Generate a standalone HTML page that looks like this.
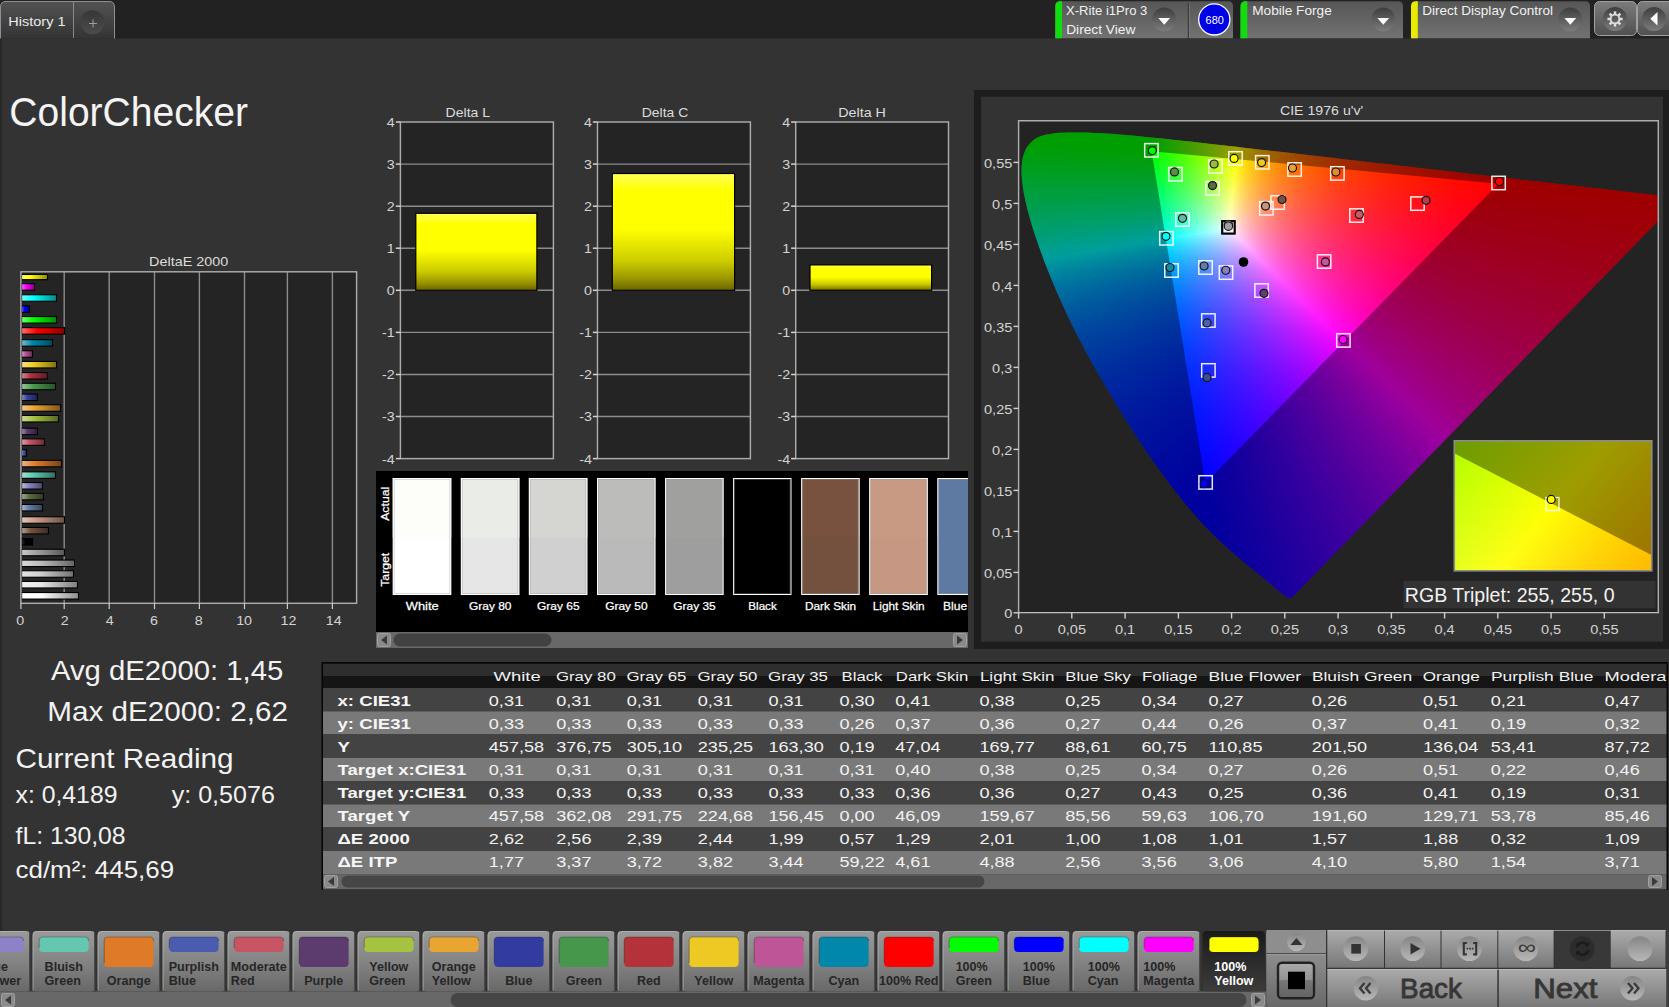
<!DOCTYPE html>
<html><head><meta charset="utf-8"><title>ColorChecker</title>
<style>
html,body{margin:0;padding:0}
body{width:1669px;height:1007px;overflow:hidden;background:#333;font-family:"Liberation Sans",sans-serif;position:relative}
div,i,svg{position:absolute;display:block}
.cg{left:0;top:0;right:0;bottom:0}
.cg i{height:2px}
svg text{font-family:"Liberation Sans",sans-serif}
</style></head>
<body>
<svg width="1669" height="1007" style="left:0;top:0">
<rect x="0" y="0" width="1669" height="38.5" fill="#222"/>
<rect x="0" y="38" width="2" height="969" fill="#272727"/>
<defs><linearGradient id="tabg" x1="0" y1="0" x2="0" y2="1"><stop offset="0" stop-color="#525252"/><stop offset="1" stop-color="#343434"/></linearGradient><linearGradient id="pang" x1="0" y1="0" x2="0" y2="1"><stop offset="0" stop-color="#565656"/><stop offset="1" stop-color="#727272"/></linearGradient><linearGradient id="circ" x1="0" y1="0" x2="0" y2="1"><stop offset="0" stop-color="#3e3e3e"/><stop offset="1" stop-color="#7c7c7c"/></linearGradient><linearGradient id="circ2" x1="0" y1="0" x2="0" y2="1"><stop offset="0" stop-color="#363636"/><stop offset="1" stop-color="#4c4c4c"/></linearGradient><linearGradient id="btng" x1="0" y1="0" x2="0" y2="1"><stop offset="0" stop-color="#7c7c7c"/><stop offset="1" stop-color="#505050"/></linearGradient></defs>
<path d="M0.5,38.5 V7 Q0.5,1.5 6,1.5 H109 Q114.5,1.5 114.5,7 V38.5" fill="url(#tabg)" stroke="#909090" stroke-width="1"/>
<line x1="73.5" y1="2" x2="73.5" y2="38" stroke="#8a8a8a" stroke-width="1"/>
<circle cx="92.5" cy="22.2" r="12" fill="url(#circ2)"/>
<path d="M89,23.5h8M93,19.5v8" stroke="#a0a0a0" stroke-width="1" fill="none"/>
<text transform="matrix(1.060 0 0 1 8.30 25.80)" font-size="13.7" fill="#ececec">History 1</text>
<path d="M1055.3,38.2 V6 Q1055.3,1.2 1060.3,1.2 H1228 Q1233,1.2 1233,6 V38.2 Z" fill="url(#pang)"/><path d="M1055.3,38.2 V6 Q1055.3,1.2 1060.3,1.2 H1062.1 V38.2 Z" fill="#10dc10"/>
<path d="M1240.5,38.2 V6 Q1240.5,1.2 1245.5,1.2 H1398 Q1403,1.2 1403,6 V38.2 Z" fill="url(#pang)"/><path d="M1240.5,38.2 V6 Q1240.5,1.2 1245.5,1.2 H1247.3 V38.2 Z" fill="#10dc10"/>
<path d="M1411,38.2 V6 Q1411,1.2 1416,1.2 H1585 Q1590,1.2 1590,6 V38.2 Z" fill="url(#pang)"/><path d="M1411,38.2 V6 Q1411,1.2 1416,1.2 H1417.8 V38.2 Z" fill="#eaea00"/>
<circle cx="1164.2" cy="19.5" r="12" fill="url(#circ)"/>
<path d="M1158.3,18 h11.8 l-5.9,6.8 z" fill="#fff"/>
<circle cx="1383.3" cy="19.5" r="12" fill="url(#circ)"/>
<path d="M1377.4,18 h11.8 l-5.9,6.8 z" fill="#fff"/>
<circle cx="1570.3" cy="19.5" r="12" fill="url(#circ)"/>
<path d="M1564.4,18 h11.8 l-5.9,6.8 z" fill="#fff"/>
<line x1="1188.4" y1="3" x2="1188.4" y2="38" stroke="#3a3a3a" stroke-width="1.2"/>
<line x1="1189.5" y1="3" x2="1189.5" y2="38" stroke="#808080" stroke-opacity="0.6" stroke-width="1"/>
<circle cx="1214.3" cy="19.4" r="15.6" fill="#0000e6" stroke="#fff" stroke-width="1.3"/>
<text x="1205.60" y="23.60" font-size="10.9" fill="#fff">680</text>
<text transform="matrix(0.997 0 0 1 1066.00 15.00)" font-size="13.1" fill="#f2f2f2">X-Rite i1Pro 3</text>
<text transform="matrix(1.047 0 0 1 1066.20 33.70)" font-size="13.1" fill="#f2f2f2">Direct View</text>
<text transform="matrix(1.041 0 0 1 1252.20 15.00)" font-size="13.1" fill="#f2f2f2">Mobile Forge</text>
<text transform="matrix(1.034 0 0 1 1422.20 15.00)" font-size="13.1" fill="#f2f2f2">Direct Display Control</text>
<rect x="1594.5" y="1.5" width="42" height="34" rx="5" fill="url(#btng)" stroke="#a0a0a0"/>
<rect x="1637.5" y="1.5" width="42" height="34" rx="5" fill="url(#btng)" stroke="#a0a0a0"/>
<circle cx="1615" cy="19" r="12" fill="url(#circ)"/>
<circle cx="1654" cy="19" r="12" fill="url(#circ)"/>
<g transform="translate(1615,19)" fill="none" stroke="#e0e0e0"><circle r="4.4" stroke-width="1.9"/><line x1="0" y1="-5" x2="0" y2="-7.6" stroke-width="2.5" transform="rotate(0)"/><line x1="0" y1="-5" x2="0" y2="-7.6" stroke-width="2.5" transform="rotate(45)"/><line x1="0" y1="-5" x2="0" y2="-7.6" stroke-width="2.5" transform="rotate(90)"/><line x1="0" y1="-5" x2="0" y2="-7.6" stroke-width="2.5" transform="rotate(135)"/><line x1="0" y1="-5" x2="0" y2="-7.6" stroke-width="2.5" transform="rotate(180)"/><line x1="0" y1="-5" x2="0" y2="-7.6" stroke-width="2.5" transform="rotate(225)"/><line x1="0" y1="-5" x2="0" y2="-7.6" stroke-width="2.5" transform="rotate(270)"/><line x1="0" y1="-5" x2="0" y2="-7.6" stroke-width="2.5" transform="rotate(315)"/></g>
<path d="M1657.5,12 v13.5 l-7.2,-6.75 z" fill="#fff"/>
<text transform="matrix(0.960 0 0 1 9.30 125.70)" font-size="40.7" fill="#f4f4f4">ColorChecker</text>
<defs><linearGradient id="b0" x1="0" y1="0" x2="1" y2="0"><stop offset="0" stop-color="#ffff72"/><stop offset="0.35" stop-color="#ffff00"/><stop offset="1" stop-color="#8c8c00"/></linearGradient><linearGradient id="b1" x1="0" y1="0" x2="1" y2="0"><stop offset="0" stop-color="#ff72ff"/><stop offset="0.35" stop-color="#ff00ff"/><stop offset="1" stop-color="#8c008c"/></linearGradient><linearGradient id="b2" x1="0" y1="0" x2="1" y2="0"><stop offset="0" stop-color="#72ffff"/><stop offset="0.35" stop-color="#00ffff"/><stop offset="1" stop-color="#008c8c"/></linearGradient><linearGradient id="b3" x1="0" y1="0" x2="1" y2="0"><stop offset="0" stop-color="#7272ff"/><stop offset="0.35" stop-color="#0000ff"/><stop offset="1" stop-color="#00008c"/></linearGradient><linearGradient id="b4" x1="0" y1="0" x2="1" y2="0"><stop offset="0" stop-color="#72ff72"/><stop offset="0.35" stop-color="#00ff00"/><stop offset="1" stop-color="#008c00"/></linearGradient><linearGradient id="b5" x1="0" y1="0" x2="1" y2="0"><stop offset="0" stop-color="#ff7272"/><stop offset="0.35" stop-color="#ff0000"/><stop offset="1" stop-color="#8c0000"/></linearGradient><linearGradient id="b6" x1="0" y1="0" x2="1" y2="0"><stop offset="0" stop-color="#72bdd0"/><stop offset="0.35" stop-color="#0088aa"/><stop offset="1" stop-color="#004a5d"/></linearGradient><linearGradient id="b7" x1="0" y1="0" x2="1" y2="0"><stop offset="0" stop-color="#d9a1c6"/><stop offset="0.35" stop-color="#bb5599"/><stop offset="1" stop-color="#662e54"/></linearGradient><linearGradient id="b8" x1="0" y1="0" x2="1" y2="0"><stop offset="0" stop-color="#f5e285"/><stop offset="0.35" stop-color="#eecc22"/><stop offset="1" stop-color="#827012"/></linearGradient><linearGradient id="b9" x1="0" y1="0" x2="1" y2="0"><stop offset="0" stop-color="#d38d95"/><stop offset="0.35" stop-color="#b03040"/><stop offset="1" stop-color="#601a23"/></linearGradient><linearGradient id="b10" x1="0" y1="0" x2="1" y2="0"><stop offset="0" stop-color="#99c69b"/><stop offset="0.35" stop-color="#47994a"/><stop offset="1" stop-color="#275428"/></linearGradient><linearGradient id="b11" x1="0" y1="0" x2="1" y2="0"><stop offset="0" stop-color="#8f95c7"/><stop offset="0.35" stop-color="#35409a"/><stop offset="1" stop-color="#1d2354"/></linearGradient><linearGradient id="b12" x1="0" y1="0" x2="1" y2="0"><stop offset="0" stop-color="#f2ca8d"/><stop offset="0.35" stop-color="#e8a030"/><stop offset="1" stop-color="#7f581a"/></linearGradient><linearGradient id="b13" x1="0" y1="0" x2="1" y2="0"><stop offset="0" stop-color="#cbdc95"/><stop offset="0.35" stop-color="#a2c040"/><stop offset="1" stop-color="#596923"/></linearGradient><linearGradient id="b14" x1="0" y1="0" x2="1" y2="0"><stop offset="0" stop-color="#a592af"/><stop offset="0.35" stop-color="#5c3a6e"/><stop offset="1" stop-color="#321f3c"/></linearGradient><linearGradient id="b15" x1="0" y1="0" x2="1" y2="0"><stop offset="0" stop-color="#dfa0aa"/><stop offset="0.35" stop-color="#c65465"/><stop offset="1" stop-color="#6c2e37"/></linearGradient><linearGradient id="b16" x1="0" y1="0" x2="1" y2="0"><stop offset="0" stop-color="#9aa5d2"/><stop offset="0.35" stop-color="#485cae"/><stop offset="1" stop-color="#27325f"/></linearGradient><linearGradient id="b17" x1="0" y1="0" x2="1" y2="0"><stop offset="0" stop-color="#ecb588"/><stop offset="0.35" stop-color="#dd7a28"/><stop offset="1" stop-color="#794316"/></linearGradient><linearGradient id="b18" x1="0" y1="0" x2="1" y2="0"><stop offset="0" stop-color="#a8e0d3"/><stop offset="0.35" stop-color="#62c8b0"/><stop offset="1" stop-color="#356e60"/></linearGradient><linearGradient id="b19" x1="0" y1="0" x2="1" y2="0"><stop offset="0" stop-color="#bdbbdc"/><stop offset="0.35" stop-color="#8884c0"/><stop offset="1" stop-color="#4a4869"/></linearGradient><linearGradient id="b20" x1="0" y1="0" x2="1" y2="0"><stop offset="0" stop-color="#a4ae95"/><stop offset="0.35" stop-color="#5a6c40"/><stop offset="1" stop-color="#313b23"/></linearGradient><linearGradient id="b21" x1="0" y1="0" x2="1" y2="0"><stop offset="0" stop-color="#a7b9ce"/><stop offset="0.35" stop-color="#6080a6"/><stop offset="1" stop-color="#34465b"/></linearGradient><linearGradient id="b22" x1="0" y1="0" x2="1" y2="0"><stop offset="0" stop-color="#e0c7bb"/><stop offset="0.35" stop-color="#c89a84"/><stop offset="1" stop-color="#6e5448"/></linearGradient><linearGradient id="b23" x1="0" y1="0" x2="1" y2="0"><stop offset="0" stop-color="#b29f95"/><stop offset="0.35" stop-color="#74513f"/><stop offset="1" stop-color="#3f2c22"/></linearGradient><linearGradient id="b24" x1="0" y1="0" x2="1" y2="0"><stop offset="0" stop-color="#2a2a2a"/><stop offset="0.35" stop-color="#000000"/><stop offset="1" stop-color="#000000"/></linearGradient><linearGradient id="b25" x1="0" y1="0" x2="1" y2="0"><stop offset="0" stop-color="#cacaca"/><stop offset="0.35" stop-color="#a0a0a0"/><stop offset="1" stop-color="#585858"/></linearGradient><linearGradient id="b26" x1="0" y1="0" x2="1" y2="0"><stop offset="0" stop-color="#dadada"/><stop offset="0.35" stop-color="#bcbcbc"/><stop offset="1" stop-color="#676767"/></linearGradient><linearGradient id="b27" x1="0" y1="0" x2="1" y2="0"><stop offset="0" stop-color="#e5e5e5"/><stop offset="0.35" stop-color="#d0d0d0"/><stop offset="1" stop-color="#727272"/></linearGradient><linearGradient id="b28" x1="0" y1="0" x2="1" y2="0"><stop offset="0" stop-color="#f1f1f1"/><stop offset="0.35" stop-color="#e6e6e6"/><stop offset="1" stop-color="#7e7e7e"/></linearGradient><linearGradient id="b29" x1="0" y1="0" x2="1" y2="0"><stop offset="0" stop-color="#ffffff"/><stop offset="0.35" stop-color="#ffffff"/><stop offset="1" stop-color="#8c8c8c"/></linearGradient></defs>
<rect x="20.9" y="271.8" width="335.7" height="331.5" fill="#242424"/>
<line x1="64.2" y1="271.8" x2="64.2" y2="603.3" stroke="#8c8c8c" stroke-width="1.4"/>
<line x1="109.2" y1="271.8" x2="109.2" y2="603.3" stroke="#8c8c8c" stroke-width="1.4"/>
<line x1="154.5" y1="271.8" x2="154.5" y2="603.3" stroke="#8c8c8c" stroke-width="1.4"/>
<line x1="199.4" y1="271.8" x2="199.4" y2="603.3" stroke="#8c8c8c" stroke-width="1.4"/>
<line x1="244.5" y1="271.8" x2="244.5" y2="603.3" stroke="#8c8c8c" stroke-width="1.4"/>
<line x1="287.4" y1="271.8" x2="287.4" y2="603.3" stroke="#8c8c8c" stroke-width="1.4"/>
<line x1="332.4" y1="271.8" x2="332.4" y2="603.3" stroke="#8c8c8c" stroke-width="1.4"/>
<rect x="21.6" y="274.45" width="25.9" height="5.2" fill="url(#b0)" stroke="#000" stroke-width="1.1"/>
<rect x="21.6" y="283.65" width="12.9" height="6.5" fill="url(#b1)" stroke="#000" stroke-width="1.1"/>
<rect x="21.6" y="294.75" width="34.9" height="6.5" fill="url(#b2)" stroke="#000" stroke-width="1.1"/>
<rect x="21.6" y="305.85" width="7.9" height="6.5" fill="url(#b3)" stroke="#000" stroke-width="1.1"/>
<rect x="21.6" y="316.55" width="34.9" height="6.5" fill="url(#b4)" stroke="#000" stroke-width="1.1"/>
<rect x="21.6" y="327.65" width="42.9" height="6.5" fill="url(#b5)" stroke="#000" stroke-width="1.1"/>
<rect x="21.6" y="339.65" width="30.9" height="6.5" fill="url(#b6)" stroke="#000" stroke-width="1.1"/>
<rect x="21.6" y="350.75" width="10.9" height="6.5" fill="url(#b7)" stroke="#000" stroke-width="1.1"/>
<rect x="21.6" y="361.45" width="34.9" height="6.5" fill="url(#b8)" stroke="#000" stroke-width="1.1"/>
<rect x="21.6" y="372.55" width="25.9" height="6.5" fill="url(#b9)" stroke="#000" stroke-width="1.1"/>
<rect x="21.6" y="383.25" width="33.9" height="6.5" fill="url(#b10)" stroke="#000" stroke-width="1.1"/>
<rect x="21.6" y="394.05" width="15.9" height="6.5" fill="url(#b11)" stroke="#000" stroke-width="1.1"/>
<rect x="21.6" y="404.75" width="38.9" height="6.5" fill="url(#b12)" stroke="#000" stroke-width="1.1"/>
<rect x="21.6" y="415.45" width="36.9" height="6.5" fill="url(#b13)" stroke="#000" stroke-width="1.1"/>
<rect x="21.6" y="428.15" width="15.9" height="6.5" fill="url(#b14)" stroke="#000" stroke-width="1.1"/>
<rect x="21.6" y="438.85" width="22.9" height="6.5" fill="url(#b15)" stroke="#000" stroke-width="1.1"/>
<rect x="21.6" y="449.65" width="4.9" height="6.5" fill="url(#b16)" stroke="#000" stroke-width="1.1"/>
<rect x="21.6" y="460.35" width="39.9" height="6.5" fill="url(#b17)" stroke="#000" stroke-width="1.1"/>
<rect x="21.6" y="471.85" width="33.9" height="6.5" fill="url(#b18)" stroke="#000" stroke-width="1.1"/>
<rect x="21.6" y="482.55" width="20.9" height="6.5" fill="url(#b19)" stroke="#000" stroke-width="1.1"/>
<rect x="21.6" y="493.35" width="21.9" height="6.5" fill="url(#b20)" stroke="#000" stroke-width="1.1"/>
<rect x="21.6" y="504.45" width="20.9" height="6.5" fill="url(#b21)" stroke="#000" stroke-width="1.1"/>
<rect x="21.6" y="516.75" width="42.9" height="6.5" fill="url(#b22)" stroke="#000" stroke-width="1.1"/>
<rect x="21.6" y="527.45" width="26.9" height="6.5" fill="url(#b23)" stroke="#000" stroke-width="1.1"/>
<rect x="21.6" y="538.55" width="10.9" height="6.5" fill="url(#b24)" stroke="#000" stroke-width="1.1"/>
<rect x="21.6" y="549.25" width="42.9" height="6.5" fill="url(#b25)" stroke="#000" stroke-width="1.1"/>
<rect x="21.6" y="560.05" width="52.9" height="6.5" fill="url(#b26)" stroke="#000" stroke-width="1.1"/>
<rect x="21.6" y="570.75" width="51.9" height="6.5" fill="url(#b27)" stroke="#000" stroke-width="1.1"/>
<rect x="21.6" y="581.45" width="55.9" height="6.5" fill="url(#b28)" stroke="#000" stroke-width="1.1"/>
<rect x="21.6" y="592.55" width="56.9" height="6.5" fill="url(#b29)" stroke="#000" stroke-width="1.1"/>
<rect x="20.9" y="271.8" width="335.7" height="331.5" fill="none" stroke="#acacac" stroke-width="1.45"/>
<line x1="20.9" y1="603.3" x2="20.9" y2="609.1" stroke="#cccccc" stroke-width="1.2"/>
<text transform="matrix(1.050 0 0 1 16.24 625.00)" font-size="13.6" fill="#d4d4d4">0</text>
<line x1="64.2" y1="603.3" x2="64.2" y2="609.1" stroke="#cccccc" stroke-width="1.2"/>
<text transform="matrix(1.050 0 0 1 60.84 625.00)" font-size="13.6" fill="#d4d4d4">2</text>
<line x1="109.2" y1="603.3" x2="109.2" y2="609.1" stroke="#cccccc" stroke-width="1.2"/>
<text transform="matrix(1.050 0 0 1 105.84 625.00)" font-size="13.6" fill="#d4d4d4">4</text>
<line x1="154.5" y1="603.3" x2="154.5" y2="609.1" stroke="#cccccc" stroke-width="1.2"/>
<text transform="matrix(1.050 0 0 1 150.04 625.00)" font-size="13.6" fill="#d4d4d4">6</text>
<line x1="199.4" y1="603.3" x2="199.4" y2="609.1" stroke="#cccccc" stroke-width="1.2"/>
<text transform="matrix(1.050 0 0 1 194.64 625.00)" font-size="13.6" fill="#d4d4d4">8</text>
<line x1="244.5" y1="603.3" x2="244.5" y2="609.1" stroke="#cccccc" stroke-width="1.2"/>
<text transform="matrix(1.050 0 0 1 236.17 625.00)" font-size="13.6" fill="#d4d4d4">10</text>
<line x1="287.4" y1="603.3" x2="287.4" y2="609.1" stroke="#cccccc" stroke-width="1.2"/>
<text transform="matrix(1.050 0 0 1 280.47 625.00)" font-size="13.6" fill="#d4d4d4">12</text>
<line x1="332.4" y1="603.3" x2="332.4" y2="609.1" stroke="#cccccc" stroke-width="1.2"/>
<text transform="matrix(1.050 0 0 1 325.77 625.00)" font-size="13.6" fill="#d4d4d4">14</text>
<text transform="matrix(1.057 0 0 1 149.10 265.90)" font-size="13.6" fill="#dcdcdc">DeltaE 2000</text>
<defs><linearGradient id="ybar" x1="0" y1="0" x2="0" y2="1"><stop offset="0" stop-color="#ffff58"/><stop offset="0.15" stop-color="#ffff00"/><stop offset="0.48" stop-color="#ffff00"/><stop offset="0.75" stop-color="#cccc00"/><stop offset="0.9" stop-color="#9a9600"/><stop offset="1" stop-color="#6a6400"/></linearGradient></defs>
<rect x="400.4" y="122" width="153" height="336.6" fill="#242424"/>
<line x1="400.4" y1="416.5" x2="553.4" y2="416.5" stroke="#8c8c8c" stroke-width="1.4"/>
<line x1="400.4" y1="374.5" x2="553.4" y2="374.5" stroke="#8c8c8c" stroke-width="1.4"/>
<line x1="400.4" y1="332.4" x2="553.4" y2="332.4" stroke="#8c8c8c" stroke-width="1.4"/>
<line x1="400.4" y1="290.3" x2="553.4" y2="290.3" stroke="#8c8c8c" stroke-width="1.4"/>
<line x1="400.4" y1="248.2" x2="553.4" y2="248.2" stroke="#8c8c8c" stroke-width="1.4"/>
<line x1="400.4" y1="206.2" x2="553.4" y2="206.2" stroke="#8c8c8c" stroke-width="1.4"/>
<line x1="400.4" y1="164.1" x2="553.4" y2="164.1" stroke="#8c8c8c" stroke-width="1.4"/>
<rect x="400.4" y="122" width="153" height="336.6" fill="none" stroke="#acacac" stroke-width="1.45"/>
<line x1="395.8" y1="458.6" x2="400.4" y2="458.6" stroke="#d4d4d4" stroke-width="1.5"/>
<text transform="matrix(1.050 0 0 1 382.09 463.50)" font-size="13.6" fill="#d4d4d4">-4</text>
<line x1="395.8" y1="416.5" x2="400.4" y2="416.5" stroke="#d4d4d4" stroke-width="1.5"/>
<text transform="matrix(1.050 0 0 1 382.09 421.43)" font-size="13.6" fill="#d4d4d4">-3</text>
<line x1="395.8" y1="374.5" x2="400.4" y2="374.5" stroke="#d4d4d4" stroke-width="1.5"/>
<text transform="matrix(1.050 0 0 1 382.09 379.35)" font-size="13.6" fill="#d4d4d4">-2</text>
<line x1="395.8" y1="332.4" x2="400.4" y2="332.4" stroke="#d4d4d4" stroke-width="1.5"/>
<text transform="matrix(1.050 0 0 1 382.09 337.27)" font-size="13.6" fill="#d4d4d4">-1</text>
<line x1="395.8" y1="290.3" x2="400.4" y2="290.3" stroke="#d4d4d4" stroke-width="1.5"/>
<text transform="matrix(1.050 0 0 1 386.87 295.20)" font-size="13.6" fill="#d4d4d4">0</text>
<line x1="395.8" y1="248.2" x2="400.4" y2="248.2" stroke="#d4d4d4" stroke-width="1.5"/>
<text transform="matrix(1.050 0 0 1 386.87 253.13)" font-size="13.6" fill="#d4d4d4">1</text>
<line x1="395.8" y1="206.2" x2="400.4" y2="206.2" stroke="#d4d4d4" stroke-width="1.5"/>
<text transform="matrix(1.050 0 0 1 386.87 211.05)" font-size="13.6" fill="#d4d4d4">2</text>
<line x1="395.8" y1="164.1" x2="400.4" y2="164.1" stroke="#d4d4d4" stroke-width="1.5"/>
<text transform="matrix(1.050 0 0 1 386.87 168.97)" font-size="13.6" fill="#d4d4d4">3</text>
<line x1="395.8" y1="122.0" x2="400.4" y2="122.0" stroke="#d4d4d4" stroke-width="1.5"/>
<text transform="matrix(1.050 0 0 1 386.87 126.90)" font-size="13.6" fill="#d4d4d4">4</text>
<rect x="415.8" y="213.3" width="121.1" height="77" fill="url(#ybar)" stroke="#000" stroke-width="1.2"/>
<text transform="matrix(1.037 0 0 1 445.50 116.90)" font-size="13.6" fill="#dcdcdc">Delta L</text>
<rect x="597.5" y="122" width="152.9" height="336.6" fill="#242424"/>
<line x1="597.5" y1="416.5" x2="750.4" y2="416.5" stroke="#8c8c8c" stroke-width="1.4"/>
<line x1="597.5" y1="374.5" x2="750.4" y2="374.5" stroke="#8c8c8c" stroke-width="1.4"/>
<line x1="597.5" y1="332.4" x2="750.4" y2="332.4" stroke="#8c8c8c" stroke-width="1.4"/>
<line x1="597.5" y1="290.3" x2="750.4" y2="290.3" stroke="#8c8c8c" stroke-width="1.4"/>
<line x1="597.5" y1="248.2" x2="750.4" y2="248.2" stroke="#8c8c8c" stroke-width="1.4"/>
<line x1="597.5" y1="206.2" x2="750.4" y2="206.2" stroke="#8c8c8c" stroke-width="1.4"/>
<line x1="597.5" y1="164.1" x2="750.4" y2="164.1" stroke="#8c8c8c" stroke-width="1.4"/>
<rect x="597.5" y="122" width="152.9" height="336.6" fill="none" stroke="#acacac" stroke-width="1.45"/>
<line x1="592.9" y1="458.6" x2="597.5" y2="458.6" stroke="#d4d4d4" stroke-width="1.5"/>
<text transform="matrix(1.050 0 0 1 579.19 463.50)" font-size="13.6" fill="#d4d4d4">-4</text>
<line x1="592.9" y1="416.5" x2="597.5" y2="416.5" stroke="#d4d4d4" stroke-width="1.5"/>
<text transform="matrix(1.050 0 0 1 579.19 421.43)" font-size="13.6" fill="#d4d4d4">-3</text>
<line x1="592.9" y1="374.5" x2="597.5" y2="374.5" stroke="#d4d4d4" stroke-width="1.5"/>
<text transform="matrix(1.050 0 0 1 579.19 379.35)" font-size="13.6" fill="#d4d4d4">-2</text>
<line x1="592.9" y1="332.4" x2="597.5" y2="332.4" stroke="#d4d4d4" stroke-width="1.5"/>
<text transform="matrix(1.050 0 0 1 579.19 337.27)" font-size="13.6" fill="#d4d4d4">-1</text>
<line x1="592.9" y1="290.3" x2="597.5" y2="290.3" stroke="#d4d4d4" stroke-width="1.5"/>
<text transform="matrix(1.050 0 0 1 583.97 295.20)" font-size="13.6" fill="#d4d4d4">0</text>
<line x1="592.9" y1="248.2" x2="597.5" y2="248.2" stroke="#d4d4d4" stroke-width="1.5"/>
<text transform="matrix(1.050 0 0 1 583.97 253.13)" font-size="13.6" fill="#d4d4d4">1</text>
<line x1="592.9" y1="206.2" x2="597.5" y2="206.2" stroke="#d4d4d4" stroke-width="1.5"/>
<text transform="matrix(1.050 0 0 1 583.97 211.05)" font-size="13.6" fill="#d4d4d4">2</text>
<line x1="592.9" y1="164.1" x2="597.5" y2="164.1" stroke="#d4d4d4" stroke-width="1.5"/>
<text transform="matrix(1.050 0 0 1 583.97 168.97)" font-size="13.6" fill="#d4d4d4">3</text>
<line x1="592.9" y1="122.0" x2="597.5" y2="122.0" stroke="#d4d4d4" stroke-width="1.5"/>
<text transform="matrix(1.050 0 0 1 583.97 126.90)" font-size="13.6" fill="#d4d4d4">4</text>
<rect x="612.3" y="173.5" width="122.3" height="116.8" fill="url(#ybar)" stroke="#000" stroke-width="1.2"/>
<text transform="matrix(1.027 0 0 1 641.70 116.90)" font-size="13.6" fill="#dcdcdc">Delta C</text>
<rect x="795.7" y="122" width="152.8" height="336.6" fill="#242424"/>
<line x1="795.7" y1="416.5" x2="948.5" y2="416.5" stroke="#8c8c8c" stroke-width="1.4"/>
<line x1="795.7" y1="374.5" x2="948.5" y2="374.5" stroke="#8c8c8c" stroke-width="1.4"/>
<line x1="795.7" y1="332.4" x2="948.5" y2="332.4" stroke="#8c8c8c" stroke-width="1.4"/>
<line x1="795.7" y1="290.3" x2="948.5" y2="290.3" stroke="#8c8c8c" stroke-width="1.4"/>
<line x1="795.7" y1="248.2" x2="948.5" y2="248.2" stroke="#8c8c8c" stroke-width="1.4"/>
<line x1="795.7" y1="206.2" x2="948.5" y2="206.2" stroke="#8c8c8c" stroke-width="1.4"/>
<line x1="795.7" y1="164.1" x2="948.5" y2="164.1" stroke="#8c8c8c" stroke-width="1.4"/>
<rect x="795.7" y="122" width="152.8" height="336.6" fill="none" stroke="#acacac" stroke-width="1.45"/>
<line x1="791.1" y1="458.6" x2="795.7" y2="458.6" stroke="#d4d4d4" stroke-width="1.5"/>
<text transform="matrix(1.050 0 0 1 777.39 463.50)" font-size="13.6" fill="#d4d4d4">-4</text>
<line x1="791.1" y1="416.5" x2="795.7" y2="416.5" stroke="#d4d4d4" stroke-width="1.5"/>
<text transform="matrix(1.050 0 0 1 777.39 421.43)" font-size="13.6" fill="#d4d4d4">-3</text>
<line x1="791.1" y1="374.5" x2="795.7" y2="374.5" stroke="#d4d4d4" stroke-width="1.5"/>
<text transform="matrix(1.050 0 0 1 777.39 379.35)" font-size="13.6" fill="#d4d4d4">-2</text>
<line x1="791.1" y1="332.4" x2="795.7" y2="332.4" stroke="#d4d4d4" stroke-width="1.5"/>
<text transform="matrix(1.050 0 0 1 777.39 337.27)" font-size="13.6" fill="#d4d4d4">-1</text>
<line x1="791.1" y1="290.3" x2="795.7" y2="290.3" stroke="#d4d4d4" stroke-width="1.5"/>
<text transform="matrix(1.050 0 0 1 782.17 295.20)" font-size="13.6" fill="#d4d4d4">0</text>
<line x1="791.1" y1="248.2" x2="795.7" y2="248.2" stroke="#d4d4d4" stroke-width="1.5"/>
<text transform="matrix(1.050 0 0 1 782.17 253.13)" font-size="13.6" fill="#d4d4d4">1</text>
<line x1="791.1" y1="206.2" x2="795.7" y2="206.2" stroke="#d4d4d4" stroke-width="1.5"/>
<text transform="matrix(1.050 0 0 1 782.17 211.05)" font-size="13.6" fill="#d4d4d4">2</text>
<line x1="791.1" y1="164.1" x2="795.7" y2="164.1" stroke="#d4d4d4" stroke-width="1.5"/>
<text transform="matrix(1.050 0 0 1 782.17 168.97)" font-size="13.6" fill="#d4d4d4">3</text>
<line x1="791.1" y1="122.0" x2="795.7" y2="122.0" stroke="#d4d4d4" stroke-width="1.5"/>
<text transform="matrix(1.050 0 0 1 782.17 126.90)" font-size="13.6" fill="#d4d4d4">4</text>
<rect x="810" y="264.9" width="121.6" height="25.4" fill="url(#ybar)" stroke="#000" stroke-width="1.2"/>
<text transform="matrix(1.052 0 0 1 838.30 116.90)" font-size="13.6" fill="#dcdcdc">Delta H</text>
<rect x="376" y="471" width="592" height="161" fill="#000"/>
<clipPath id="swc"><rect x="376" y="471" width="592" height="161"/></clipPath><g clip-path="url(#swc)">
<rect x="392.8" y="478" width="58.4" height="117" fill="#ffffff"/>
<rect x="392.8" y="478" width="58.4" height="59.5" fill="#fdfefa"/>
<rect x="393.3" y="478.5" width="57.4" height="116" fill="none" stroke="#fff" stroke-width="1"/>
<rect x="394.3" y="479.5" width="55.4" height="114" fill="none" stroke="#999" stroke-opacity="0.35" stroke-width="1"/>
<text transform="matrix(1.095 0 0 1 405.70 609.50)" font-size="11.8" fill="#fff" stroke="#fff" stroke-width="0.25">White</text>
<rect x="460.9" y="478" width="58.4" height="117" fill="#e6e6e6"/>
<rect x="460.9" y="478" width="58.4" height="59.5" fill="#eaece8"/>
<rect x="461.4" y="478.5" width="57.4" height="116" fill="none" stroke="#fff" stroke-width="1"/>
<rect x="462.4" y="479.5" width="55.4" height="114" fill="none" stroke="#999" stroke-opacity="0.35" stroke-width="1"/>
<text transform="matrix(1.013 0 0 1 469.02 609.50)" font-size="11.8" fill="#fff" stroke="#fff" stroke-width="0.25">Gray 80</text>
<rect x="528.9" y="478" width="58.4" height="117" fill="#d0d0d0"/>
<rect x="528.9" y="478" width="58.4" height="59.5" fill="#d5d6d2"/>
<rect x="529.4" y="478.5" width="57.4" height="116" fill="none" stroke="#fff" stroke-width="1"/>
<rect x="530.4" y="479.5" width="55.4" height="114" fill="none" stroke="#999" stroke-opacity="0.35" stroke-width="1"/>
<text transform="matrix(1.013 0 0 1 537.09 609.50)" font-size="11.8" fill="#fff" stroke="#fff" stroke-width="0.25">Gray 65</text>
<rect x="597.0" y="478" width="58.4" height="117" fill="#bababa"/>
<rect x="597.0" y="478" width="58.4" height="59.5" fill="#bcbcba"/>
<rect x="597.5" y="478.5" width="57.4" height="116" fill="none" stroke="#fff" stroke-width="1"/>
<rect x="598.5" y="479.5" width="55.4" height="114" fill="none" stroke="#999" stroke-opacity="0.35" stroke-width="1"/>
<text transform="matrix(1.013 0 0 1 605.16 609.50)" font-size="11.8" fill="#fff" stroke="#fff" stroke-width="0.25">Gray 50</text>
<rect x="665.1" y="478" width="58.4" height="117" fill="#9e9e9e"/>
<rect x="665.1" y="478" width="58.4" height="59.5" fill="#a0a19f"/>
<rect x="665.6" y="478.5" width="57.4" height="116" fill="none" stroke="#fff" stroke-width="1"/>
<rect x="666.6" y="479.5" width="55.4" height="114" fill="none" stroke="#999" stroke-opacity="0.35" stroke-width="1"/>
<text transform="matrix(1.013 0 0 1 673.23 609.50)" font-size="11.8" fill="#fff" stroke="#fff" stroke-width="0.25">Gray 35</text>
<rect x="733.1" y="478" width="58.4" height="117" fill="#000000"/>
<rect x="733.1" y="478" width="58.4" height="59.5" fill="#000000"/>
<rect x="733.6" y="478.5" width="57.4" height="116" fill="none" stroke="#fff" stroke-width="1"/>
<rect x="734.6" y="479.5" width="55.4" height="114" fill="none" stroke="#999" stroke-opacity="0.35" stroke-width="1"/>
<text transform="matrix(0.986 0 0 1 748.30 609.50)" font-size="11.8" fill="#fff" stroke="#fff" stroke-width="0.25">Black</text>
<rect x="801.2" y="478" width="58.4" height="117" fill="#74513f"/>
<rect x="801.2" y="478" width="58.4" height="59.5" fill="#78513f"/>
<rect x="801.7" y="478.5" width="57.4" height="116" fill="none" stroke="#fff" stroke-width="1"/>
<rect x="802.7" y="479.5" width="55.4" height="114" fill="none" stroke="#999" stroke-opacity="0.35" stroke-width="1"/>
<text x="805.02" y="609.50" font-size="11.8" fill="#fff" stroke="#fff" stroke-width="0.25">Dark Skin</text>
<rect x="869.3" y="478" width="58.4" height="117" fill="#c69883"/>
<rect x="869.3" y="478" width="58.4" height="59.5" fill="#c89a84"/>
<rect x="869.8" y="478.5" width="57.4" height="116" fill="none" stroke="#fff" stroke-width="1"/>
<rect x="870.8" y="479.5" width="55.4" height="114" fill="none" stroke="#999" stroke-opacity="0.35" stroke-width="1"/>
<text transform="matrix(1.002 0 0 1 872.74 609.50)" font-size="11.8" fill="#fff" stroke="#fff" stroke-width="0.25">Light Skin</text>
<rect x="937.4" y="478" width="58.4" height="117" fill="#5e7aa2"/>
<rect x="937.4" y="478" width="58.4" height="59.5" fill="#5e7aa2"/>
<rect x="937.9" y="478.5" width="57.4" height="116" fill="none" stroke="#fff" stroke-width="1"/>
<rect x="938.9" y="479.5" width="55.4" height="114" fill="none" stroke="#999" stroke-opacity="0.35" stroke-width="1"/>
<text transform="matrix(1.020 0 0 1 943.01 609.50)" font-size="11.8" fill="#fff" stroke="#fff" stroke-width="0.25">Blue Sky</text>
</g>
<text transform="translate(388.6,520.8) rotate(-90) scale(1.04,1)" font-size="11.8" fill="#fff" stroke="#fff" stroke-width="0.25">Actual</text>
<text transform="translate(388.6,586.8) rotate(-90) scale(1.04,1)" font-size="11.8" fill="#fff" stroke="#fff" stroke-width="0.25">Target</text>
<rect x="376" y="632" width="592" height="16" fill="#686868"/>
<rect x="393.5" y="633.5" width="158" height="13" rx="6.5" fill="#424242"/>
<rect x="377.5" y="633.5" width="13" height="13" rx="2" fill="#8a8a8a" stroke="#a0a0a0"/>
<path d="M387,635.5 v9 l-6,-4.5 z" fill="#3a3a3a"/>
<rect x="953.5" y="633.5" width="13" height="13" rx="2" fill="#8a8a8a" stroke="#a0a0a0"/>
<path d="M957,635.5 v9 l6,-4.5 z" fill="#3a3a3a"/>
<rect x="974" y="90" width="695" height="559" fill="#1d1d1d"/>
<rect x="981" y="96.7" width="682" height="545" fill="#333"/>
<rect x="1018.5" y="120.5" width="640" height="492" fill="#232323"/>
<rect x="321.5" y="662" width="1346.5" height="228" fill="#060606"/>
<clipPath id="tbc"><rect x="323" y="663.5" width="1343.5" height="226"/></clipPath><g clip-path="url(#tbc)">
<rect x="323" y="663.4" width="1345" height="13" fill="#2e2e2e"/>
<rect x="323" y="676.3" width="1345" height="12" fill="#151515"/>
<rect x="323" y="688.00" width="1345" height="23.3" fill="#434343"/>
<text transform="matrix(1.275 0 0 1 337.50 706.00)" font-size="14.6" fill="#f6f6f6" font-weight="bold">x: CIE31</text>
<text transform="matrix(1.225 0 0 1 488.80 706.00)" font-size="14.8" fill="#f2f2f2">0,31</text>
<text transform="matrix(1.225 0 0 1 556.20 706.00)" font-size="14.8" fill="#f2f2f2">0,31</text>
<text transform="matrix(1.225 0 0 1 626.80 706.00)" font-size="14.8" fill="#f2f2f2">0,31</text>
<text transform="matrix(1.225 0 0 1 697.80 706.00)" font-size="14.8" fill="#f2f2f2">0,31</text>
<text transform="matrix(1.225 0 0 1 768.40 706.00)" font-size="14.8" fill="#f2f2f2">0,31</text>
<text transform="matrix(1.225 0 0 1 839.40 706.00)" font-size="14.8" fill="#f2f2f2">0,30</text>
<text transform="matrix(1.225 0 0 1 895.20 706.00)" font-size="14.8" fill="#f2f2f2">0,41</text>
<text transform="matrix(1.225 0 0 1 979.40 706.00)" font-size="14.8" fill="#f2f2f2">0,38</text>
<text transform="matrix(1.225 0 0 1 1065.20 706.00)" font-size="14.8" fill="#f2f2f2">0,25</text>
<text transform="matrix(1.225 0 0 1 1141.50 706.00)" font-size="14.8" fill="#f2f2f2">0,34</text>
<text transform="matrix(1.225 0 0 1 1208.40 706.00)" font-size="14.8" fill="#f2f2f2">0,27</text>
<text transform="matrix(1.225 0 0 1 1311.80 706.00)" font-size="14.8" fill="#f2f2f2">0,26</text>
<text transform="matrix(1.225 0 0 1 1423.00 706.00)" font-size="14.8" fill="#f2f2f2">0,51</text>
<text transform="matrix(1.225 0 0 1 1490.80 706.00)" font-size="14.8" fill="#f2f2f2">0,21</text>
<text transform="matrix(1.225 0 0 1 1604.50 706.00)" font-size="14.8" fill="#f2f2f2">0,47</text>
<rect x="323" y="711.26" width="1345" height="23.3" fill="#797979"/>
<text transform="matrix(1.275 0 0 1 337.50 729.05)" font-size="14.6" fill="#f6f6f6" font-weight="bold">y: CIE31</text>
<text transform="matrix(1.225 0 0 1 488.80 729.05)" font-size="14.8" fill="#f2f2f2">0,33</text>
<text transform="matrix(1.225 0 0 1 556.20 729.05)" font-size="14.8" fill="#f2f2f2">0,33</text>
<text transform="matrix(1.225 0 0 1 626.80 729.05)" font-size="14.8" fill="#f2f2f2">0,33</text>
<text transform="matrix(1.225 0 0 1 697.80 729.05)" font-size="14.8" fill="#f2f2f2">0,33</text>
<text transform="matrix(1.225 0 0 1 768.40 729.05)" font-size="14.8" fill="#f2f2f2">0,33</text>
<text transform="matrix(1.225 0 0 1 839.40 729.05)" font-size="14.8" fill="#f2f2f2">0,26</text>
<text transform="matrix(1.225 0 0 1 895.20 729.05)" font-size="14.8" fill="#f2f2f2">0,37</text>
<text transform="matrix(1.225 0 0 1 979.40 729.05)" font-size="14.8" fill="#f2f2f2">0,36</text>
<text transform="matrix(1.225 0 0 1 1065.20 729.05)" font-size="14.8" fill="#f2f2f2">0,27</text>
<text transform="matrix(1.225 0 0 1 1141.50 729.05)" font-size="14.8" fill="#f2f2f2">0,44</text>
<text transform="matrix(1.225 0 0 1 1208.40 729.05)" font-size="14.8" fill="#f2f2f2">0,26</text>
<text transform="matrix(1.225 0 0 1 1311.80 729.05)" font-size="14.8" fill="#f2f2f2">0,37</text>
<text transform="matrix(1.225 0 0 1 1423.00 729.05)" font-size="14.8" fill="#f2f2f2">0,41</text>
<text transform="matrix(1.225 0 0 1 1490.80 729.05)" font-size="14.8" fill="#f2f2f2">0,19</text>
<text transform="matrix(1.225 0 0 1 1604.50 729.05)" font-size="14.8" fill="#f2f2f2">0,32</text>
<rect x="323" y="734.52" width="1345" height="23.3" fill="#434343"/>
<text transform="matrix(1.275 0 0 1 337.50 752.10)" font-size="14.6" fill="#f6f6f6" font-weight="bold">Y</text>
<text transform="matrix(1.225 0 0 1 488.80 752.10)" font-size="14.8" fill="#f2f2f2">457,58</text>
<text transform="matrix(1.225 0 0 1 556.20 752.10)" font-size="14.8" fill="#f2f2f2">376,75</text>
<text transform="matrix(1.225 0 0 1 626.80 752.10)" font-size="14.8" fill="#f2f2f2">305,10</text>
<text transform="matrix(1.225 0 0 1 697.80 752.10)" font-size="14.8" fill="#f2f2f2">235,25</text>
<text transform="matrix(1.225 0 0 1 768.40 752.10)" font-size="14.8" fill="#f2f2f2">163,30</text>
<text transform="matrix(1.225 0 0 1 839.40 752.10)" font-size="14.8" fill="#f2f2f2">0,19</text>
<text transform="matrix(1.225 0 0 1 895.20 752.10)" font-size="14.8" fill="#f2f2f2">47,04</text>
<text transform="matrix(1.225 0 0 1 979.40 752.10)" font-size="14.8" fill="#f2f2f2">169,77</text>
<text transform="matrix(1.225 0 0 1 1065.20 752.10)" font-size="14.8" fill="#f2f2f2">88,61</text>
<text transform="matrix(1.225 0 0 1 1141.50 752.10)" font-size="14.8" fill="#f2f2f2">60,75</text>
<text transform="matrix(1.225 0 0 1 1208.40 752.10)" font-size="14.8" fill="#f2f2f2">110,85</text>
<text transform="matrix(1.225 0 0 1 1311.80 752.10)" font-size="14.8" fill="#f2f2f2">201,50</text>
<text transform="matrix(1.225 0 0 1 1423.00 752.10)" font-size="14.8" fill="#f2f2f2">136,04</text>
<text transform="matrix(1.225 0 0 1 1490.80 752.10)" font-size="14.8" fill="#f2f2f2">53,41</text>
<text transform="matrix(1.225 0 0 1 1604.50 752.10)" font-size="14.8" fill="#f2f2f2">87,72</text>
<rect x="323" y="757.78" width="1345" height="23.3" fill="#797979"/>
<text transform="matrix(1.275 0 0 1 337.50 775.15)" font-size="14.6" fill="#f6f6f6" font-weight="bold">Target x:CIE31</text>
<text transform="matrix(1.225 0 0 1 488.80 775.15)" font-size="14.8" fill="#f2f2f2">0,31</text>
<text transform="matrix(1.225 0 0 1 556.20 775.15)" font-size="14.8" fill="#f2f2f2">0,31</text>
<text transform="matrix(1.225 0 0 1 626.80 775.15)" font-size="14.8" fill="#f2f2f2">0,31</text>
<text transform="matrix(1.225 0 0 1 697.80 775.15)" font-size="14.8" fill="#f2f2f2">0,31</text>
<text transform="matrix(1.225 0 0 1 768.40 775.15)" font-size="14.8" fill="#f2f2f2">0,31</text>
<text transform="matrix(1.225 0 0 1 839.40 775.15)" font-size="14.8" fill="#f2f2f2">0,31</text>
<text transform="matrix(1.225 0 0 1 895.20 775.15)" font-size="14.8" fill="#f2f2f2">0,40</text>
<text transform="matrix(1.225 0 0 1 979.40 775.15)" font-size="14.8" fill="#f2f2f2">0,38</text>
<text transform="matrix(1.225 0 0 1 1065.20 775.15)" font-size="14.8" fill="#f2f2f2">0,25</text>
<text transform="matrix(1.225 0 0 1 1141.50 775.15)" font-size="14.8" fill="#f2f2f2">0,34</text>
<text transform="matrix(1.225 0 0 1 1208.40 775.15)" font-size="14.8" fill="#f2f2f2">0,27</text>
<text transform="matrix(1.225 0 0 1 1311.80 775.15)" font-size="14.8" fill="#f2f2f2">0,26</text>
<text transform="matrix(1.225 0 0 1 1423.00 775.15)" font-size="14.8" fill="#f2f2f2">0,51</text>
<text transform="matrix(1.225 0 0 1 1490.80 775.15)" font-size="14.8" fill="#f2f2f2">0,22</text>
<text transform="matrix(1.225 0 0 1 1604.50 775.15)" font-size="14.8" fill="#f2f2f2">0,46</text>
<rect x="323" y="781.04" width="1345" height="23.3" fill="#434343"/>
<text transform="matrix(1.275 0 0 1 337.50 798.20)" font-size="14.6" fill="#f6f6f6" font-weight="bold">Target y:CIE31</text>
<text transform="matrix(1.225 0 0 1 488.80 798.20)" font-size="14.8" fill="#f2f2f2">0,33</text>
<text transform="matrix(1.225 0 0 1 556.20 798.20)" font-size="14.8" fill="#f2f2f2">0,33</text>
<text transform="matrix(1.225 0 0 1 626.80 798.20)" font-size="14.8" fill="#f2f2f2">0,33</text>
<text transform="matrix(1.225 0 0 1 697.80 798.20)" font-size="14.8" fill="#f2f2f2">0,33</text>
<text transform="matrix(1.225 0 0 1 768.40 798.20)" font-size="14.8" fill="#f2f2f2">0,33</text>
<text transform="matrix(1.225 0 0 1 839.40 798.20)" font-size="14.8" fill="#f2f2f2">0,33</text>
<text transform="matrix(1.225 0 0 1 895.20 798.20)" font-size="14.8" fill="#f2f2f2">0,36</text>
<text transform="matrix(1.225 0 0 1 979.40 798.20)" font-size="14.8" fill="#f2f2f2">0,36</text>
<text transform="matrix(1.225 0 0 1 1065.20 798.20)" font-size="14.8" fill="#f2f2f2">0,27</text>
<text transform="matrix(1.225 0 0 1 1141.50 798.20)" font-size="14.8" fill="#f2f2f2">0,43</text>
<text transform="matrix(1.225 0 0 1 1208.40 798.20)" font-size="14.8" fill="#f2f2f2">0,25</text>
<text transform="matrix(1.225 0 0 1 1311.80 798.20)" font-size="14.8" fill="#f2f2f2">0,36</text>
<text transform="matrix(1.225 0 0 1 1423.00 798.20)" font-size="14.8" fill="#f2f2f2">0,41</text>
<text transform="matrix(1.225 0 0 1 1490.80 798.20)" font-size="14.8" fill="#f2f2f2">0,19</text>
<text transform="matrix(1.225 0 0 1 1604.50 798.20)" font-size="14.8" fill="#f2f2f2">0,31</text>
<rect x="323" y="804.30" width="1345" height="23.3" fill="#797979"/>
<text transform="matrix(1.275 0 0 1 337.50 821.25)" font-size="14.6" fill="#f6f6f6" font-weight="bold">Target Y</text>
<text transform="matrix(1.225 0 0 1 488.80 821.25)" font-size="14.8" fill="#f2f2f2">457,58</text>
<text transform="matrix(1.225 0 0 1 556.20 821.25)" font-size="14.8" fill="#f2f2f2">362,08</text>
<text transform="matrix(1.225 0 0 1 626.80 821.25)" font-size="14.8" fill="#f2f2f2">291,75</text>
<text transform="matrix(1.225 0 0 1 697.80 821.25)" font-size="14.8" fill="#f2f2f2">224,68</text>
<text transform="matrix(1.225 0 0 1 768.40 821.25)" font-size="14.8" fill="#f2f2f2">156,45</text>
<text transform="matrix(1.225 0 0 1 839.40 821.25)" font-size="14.8" fill="#f2f2f2">0,00</text>
<text transform="matrix(1.225 0 0 1 895.20 821.25)" font-size="14.8" fill="#f2f2f2">46,09</text>
<text transform="matrix(1.225 0 0 1 979.40 821.25)" font-size="14.8" fill="#f2f2f2">159,67</text>
<text transform="matrix(1.225 0 0 1 1065.20 821.25)" font-size="14.8" fill="#f2f2f2">85,56</text>
<text transform="matrix(1.225 0 0 1 1141.50 821.25)" font-size="14.8" fill="#f2f2f2">59,63</text>
<text transform="matrix(1.225 0 0 1 1208.40 821.25)" font-size="14.8" fill="#f2f2f2">106,70</text>
<text transform="matrix(1.225 0 0 1 1311.80 821.25)" font-size="14.8" fill="#f2f2f2">191,60</text>
<text transform="matrix(1.225 0 0 1 1423.00 821.25)" font-size="14.8" fill="#f2f2f2">129,71</text>
<text transform="matrix(1.225 0 0 1 1490.80 821.25)" font-size="14.8" fill="#f2f2f2">53,78</text>
<text transform="matrix(1.225 0 0 1 1604.50 821.25)" font-size="14.8" fill="#f2f2f2">85,46</text>
<rect x="323" y="827.56" width="1345" height="23.3" fill="#434343"/>
<text transform="matrix(1.275 0 0 1 337.50 844.30)" font-size="14.6" fill="#f6f6f6" font-weight="bold">ΔE 2000</text>
<text transform="matrix(1.225 0 0 1 488.80 844.30)" font-size="14.8" fill="#f2f2f2">2,62</text>
<text transform="matrix(1.225 0 0 1 556.20 844.30)" font-size="14.8" fill="#f2f2f2">2,56</text>
<text transform="matrix(1.225 0 0 1 626.80 844.30)" font-size="14.8" fill="#f2f2f2">2,39</text>
<text transform="matrix(1.225 0 0 1 697.80 844.30)" font-size="14.8" fill="#f2f2f2">2,44</text>
<text transform="matrix(1.225 0 0 1 768.40 844.30)" font-size="14.8" fill="#f2f2f2">1,99</text>
<text transform="matrix(1.225 0 0 1 839.40 844.30)" font-size="14.8" fill="#f2f2f2">0,57</text>
<text transform="matrix(1.225 0 0 1 895.20 844.30)" font-size="14.8" fill="#f2f2f2">1,29</text>
<text transform="matrix(1.225 0 0 1 979.40 844.30)" font-size="14.8" fill="#f2f2f2">2,01</text>
<text transform="matrix(1.225 0 0 1 1065.20 844.30)" font-size="14.8" fill="#f2f2f2">1,00</text>
<text transform="matrix(1.225 0 0 1 1141.50 844.30)" font-size="14.8" fill="#f2f2f2">1,08</text>
<text transform="matrix(1.225 0 0 1 1208.40 844.30)" font-size="14.8" fill="#f2f2f2">1,01</text>
<text transform="matrix(1.225 0 0 1 1311.80 844.30)" font-size="14.8" fill="#f2f2f2">1,57</text>
<text transform="matrix(1.225 0 0 1 1423.00 844.30)" font-size="14.8" fill="#f2f2f2">1,88</text>
<text transform="matrix(1.225 0 0 1 1490.80 844.30)" font-size="14.8" fill="#f2f2f2">0,32</text>
<text transform="matrix(1.225 0 0 1 1604.50 844.30)" font-size="14.8" fill="#f2f2f2">1,09</text>
<rect x="323" y="850.82" width="1345" height="23.3" fill="#797979"/>
<text transform="matrix(1.275 0 0 1 337.50 867.35)" font-size="14.6" fill="#f6f6f6" font-weight="bold">ΔE ITP</text>
<text transform="matrix(1.225 0 0 1 488.80 867.35)" font-size="14.8" fill="#f2f2f2">1,77</text>
<text transform="matrix(1.225 0 0 1 556.20 867.35)" font-size="14.8" fill="#f2f2f2">3,37</text>
<text transform="matrix(1.225 0 0 1 626.80 867.35)" font-size="14.8" fill="#f2f2f2">3,72</text>
<text transform="matrix(1.225 0 0 1 697.80 867.35)" font-size="14.8" fill="#f2f2f2">3,82</text>
<text transform="matrix(1.225 0 0 1 768.40 867.35)" font-size="14.8" fill="#f2f2f2">3,44</text>
<text transform="matrix(1.225 0 0 1 839.40 867.35)" font-size="14.8" fill="#f2f2f2">59,22</text>
<text transform="matrix(1.225 0 0 1 895.20 867.35)" font-size="14.8" fill="#f2f2f2">4,61</text>
<text transform="matrix(1.225 0 0 1 979.40 867.35)" font-size="14.8" fill="#f2f2f2">4,88</text>
<text transform="matrix(1.225 0 0 1 1065.20 867.35)" font-size="14.8" fill="#f2f2f2">2,56</text>
<text transform="matrix(1.225 0 0 1 1141.50 867.35)" font-size="14.8" fill="#f2f2f2">3,56</text>
<text transform="matrix(1.225 0 0 1 1208.40 867.35)" font-size="14.8" fill="#f2f2f2">3,06</text>
<text transform="matrix(1.225 0 0 1 1311.80 867.35)" font-size="14.8" fill="#f2f2f2">4,10</text>
<text transform="matrix(1.225 0 0 1 1423.00 867.35)" font-size="14.8" fill="#f2f2f2">5,80</text>
<text transform="matrix(1.225 0 0 1 1490.80 867.35)" font-size="14.8" fill="#f2f2f2">1,54</text>
<text transform="matrix(1.225 0 0 1 1604.50 867.35)" font-size="14.8" fill="#f2f2f2">3,71</text>
<text transform="matrix(1.421 0 0 1 493.50 680.70)" font-size="13.0" fill="#f2f2f2">White</text>
<text transform="matrix(1.296 0 0 1 555.90 680.70)" font-size="13.0" fill="#f2f2f2">Gray 80</text>
<text transform="matrix(1.296 0 0 1 626.50 680.70)" font-size="13.0" fill="#f2f2f2">Gray 65</text>
<text transform="matrix(1.296 0 0 1 697.50 680.70)" font-size="13.0" fill="#f2f2f2">Gray 50</text>
<text transform="matrix(1.296 0 0 1 768.10 680.70)" font-size="13.0" fill="#f2f2f2">Gray 35</text>
<text transform="matrix(1.287 0 0 1 841.60 680.70)" font-size="13.0" fill="#f2f2f2">Black</text>
<text transform="matrix(1.288 0 0 1 895.80 680.70)" font-size="13.0" fill="#f2f2f2">Dark Skin</text>
<text transform="matrix(1.309 0 0 1 979.90 680.70)" font-size="13.0" fill="#f2f2f2">Light Skin</text>
<text transform="matrix(1.279 0 0 1 1065.30 680.70)" font-size="13.0" fill="#f2f2f2">Blue Sky</text>
<text transform="matrix(1.299 0 0 1 1142.00 680.70)" font-size="13.0" fill="#f2f2f2">Foliage</text>
<text transform="matrix(1.352 0 0 1 1208.50 680.70)" font-size="13.0" fill="#f2f2f2">Blue Flower</text>
<text transform="matrix(1.334 0 0 1 1311.90 680.70)" font-size="13.0" fill="#f2f2f2">Bluish Green</text>
<text transform="matrix(1.317 0 0 1 1422.70 680.70)" font-size="13.0" fill="#f2f2f2">Orange</text>
<text transform="matrix(1.340 0 0 1 1490.90 680.70)" font-size="13.0" fill="#f2f2f2">Purplish Blue</text>
<text transform="matrix(1.402 0 0 1 1604.60 680.70)" font-size="13.0" fill="#f2f2f2">Moderat</text>
<rect x="323" y="874.1" width="1345" height="16" fill="#686868"/>
<rect x="341.5" y="875.5" width="643" height="12" rx="6" fill="#464646"/>
<rect x="324.5" y="875.5" width="13" height="12" rx="2" fill="#8a8a8a" stroke="#a0a0a0"/>
<path d="M334,877 v9 l-6,-4.5 z" fill="#3a3a3a"/>
<rect x="1648.5" y="875.5" width="13" height="12" rx="2" fill="#8a8a8a" stroke="#a0a0a0"/>
<path d="M1652,877 v9 l6,-4.5 z" fill="#3a3a3a"/>
</g>
<text transform="matrix(1.039 0 0 1 50.90 680.00)" font-size="28.2" fill="#f2f2f2">Avg dE2000: 1,45</text>
<text transform="matrix(1.052 0 0 1 47.20 720.60)" font-size="28.2" fill="#f2f2f2">Max dE2000: 2,62</text>
<text transform="matrix(1.054 0 0 1 15.50 768.30)" font-size="28.2" fill="#f2f2f2">Current Reading</text>
<text transform="matrix(1.004 0 0 1 15.50 803.40)" font-size="24.7" fill="#f2f2f2">x: 0,4189</text>
<text transform="matrix(1.016 0 0 1 171.70 803.40)" font-size="24.7" fill="#f2f2f2">y: 0,5076</text>
<text transform="matrix(1.003 0 0 1 15.50 844.00)" font-size="24.7" fill="#f2f2f2">fL: 130,08</text>
<text transform="matrix(1.051 0 0 1 15.50 877.50)" font-size="24.7" fill="#f2f2f2">cd/m²: 445,69</text>
<defs><linearGradient id="bb" x1="0" y1="0" x2="0" y2="1"><stop offset="0" stop-color="#9a9a9a"/><stop offset="0.5" stop-color="#848484"/><stop offset="1" stop-color="#686868"/></linearGradient><linearGradient id="bsel" x1="0" y1="0" x2="0" y2="1"><stop offset="0" stop-color="#1a1a1a"/><stop offset="1" stop-color="#3c3c3c"/></linearGradient><linearGradient id="cb" x1="0" y1="0" x2="0" y2="1"><stop offset="0" stop-color="#ababab"/><stop offset="1" stop-color="#787878"/></linearGradient><linearGradient id="cc" x1="0" y1="0" x2="0" y2="1"><stop offset="0" stop-color="#858585"/><stop offset="1" stop-color="#b8b8b8"/></linearGradient></defs>
<rect x="0" y="991.5" width="1266" height="16" fill="#686868"/>
<rect x="450.5" y="993" width="796" height="14" rx="7" fill="#464646"/>
<rect x="1.5" y="993.5" width="13" height="13" rx="2" fill="#8a8a8a" stroke="#a0a0a0"/>
<path d="M11,995.5 v9 l-6,-4.5 z" fill="#3a3a3a"/>
<rect x="1251.5" y="993.5" width="13" height="13" rx="2" fill="#8a8a8a" stroke="#a0a0a0"/>
<path d="M1255,995.5 v9 l6,-4.5 z" fill="#3a3a3a"/>
<rect x="-32.4" y="931" width="62.4" height="60.5" rx="4" fill="url(#bb)"/>
<path d="M-31.9,991 V935 Q-31.9,931.5 -27.9,931.5 H25.6" fill="none" stroke="#b4b4b4" stroke-opacity="0.7" stroke-width="1"/>
<path d="M29.6,933 V991.5" fill="none" stroke="#4a4a4a" stroke-width="1.2"/>
<rect x="-25.8" y="937" width="49.4" height="15" rx="4" fill="#8c82c8"/>
<path d="M-25.8,948 v-7 q0,-4 4,-4 h41.4 q4,0 4,4" fill="none" stroke="#000" stroke-opacity="0.25" stroke-width="1.2"/>
<text transform="matrix(0.960 0 0 1 -19.26 970.70)" font-size="13.1" fill="#262626" font-weight="bold">Blue</text>
<text transform="matrix(0.960 0 0 1 -19.26 985.40)" font-size="13.1" fill="#262626" font-weight="bold">Flower</text>
<rect x="32.6" y="931" width="62.4" height="60.5" rx="4" fill="url(#bb)"/>
<path d="M33.1,991 V935 Q33.1,931.5 37.1,931.5 H90.6" fill="none" stroke="#b4b4b4" stroke-opacity="0.7" stroke-width="1"/>
<path d="M94.6,933 V991.5" fill="none" stroke="#4a4a4a" stroke-width="1.2"/>
<rect x="39.2" y="937" width="49.4" height="15" rx="4" fill="#64c8af"/>
<path d="M39.2,948 v-7 q0,-4 4,-4 h41.4 q4,0 4,4" fill="none" stroke="#000" stroke-opacity="0.25" stroke-width="1.2"/>
<text transform="matrix(0.960 0 0 1 44.59 970.70)" font-size="13.1" fill="#262626" font-weight="bold">Bluish</text>
<text transform="matrix(0.960 0 0 1 44.59 985.40)" font-size="13.1" fill="#262626" font-weight="bold">Green</text>
<rect x="97.6" y="931" width="62.4" height="60.5" rx="4" fill="url(#bb)"/>
<path d="M98.1,991 V935 Q98.1,931.5 102.1,931.5 H155.6" fill="none" stroke="#b4b4b4" stroke-opacity="0.7" stroke-width="1"/>
<path d="M159.6,933 V991.5" fill="none" stroke="#4a4a4a" stroke-width="1.2"/>
<rect x="104.2" y="937" width="49.4" height="30" rx="4" fill="#de7a28"/>
<path d="M104.2,963 v-22 q0,-4 4,-4 h41.4 q4,0 4,4" fill="none" stroke="#000" stroke-opacity="0.25" stroke-width="1.2"/>
<text transform="matrix(0.960 0 0 1 106.79 985.40)" font-size="13.1" fill="#262626" font-weight="bold">Orange</text>
<rect x="162.6" y="931" width="62.4" height="60.5" rx="4" fill="url(#bb)"/>
<path d="M163.1,991 V935 Q163.1,931.5 167.1,931.5 H220.6" fill="none" stroke="#b4b4b4" stroke-opacity="0.7" stroke-width="1"/>
<path d="M224.6,933 V991.5" fill="none" stroke="#4a4a4a" stroke-width="1.2"/>
<rect x="169.2" y="937" width="49.4" height="15" rx="4" fill="#4b5caf"/>
<path d="M169.2,948 v-7 q0,-4 4,-4 h41.4 q4,0 4,4" fill="none" stroke="#000" stroke-opacity="0.25" stroke-width="1.2"/>
<text transform="matrix(0.960 0 0 1 168.64 970.70)" font-size="13.1" fill="#262626" font-weight="bold">Purplish</text>
<text transform="matrix(0.960 0 0 1 168.64 985.40)" font-size="13.1" fill="#262626" font-weight="bold">Blue</text>
<rect x="227.6" y="931" width="62.4" height="60.5" rx="4" fill="url(#bb)"/>
<path d="M228.1,991 V935 Q228.1,931.5 232.1,931.5 H285.6" fill="none" stroke="#b4b4b4" stroke-opacity="0.7" stroke-width="1"/>
<path d="M289.6,933 V991.5" fill="none" stroke="#4a4a4a" stroke-width="1.2"/>
<rect x="234.2" y="937" width="49.4" height="15" rx="4" fill="#c85564"/>
<path d="M234.2,948 v-7 q0,-4 4,-4 h41.4 q4,0 4,4" fill="none" stroke="#000" stroke-opacity="0.25" stroke-width="1.2"/>
<text transform="matrix(0.960 0 0 1 230.85 970.70)" font-size="13.1" fill="#262626" font-weight="bold">Moderate</text>
<text transform="matrix(0.960 0 0 1 230.85 985.40)" font-size="13.1" fill="#262626" font-weight="bold">Red</text>
<rect x="292.6" y="931" width="62.4" height="60.5" rx="4" fill="url(#bb)"/>
<path d="M293.1,991 V935 Q293.1,931.5 297.1,931.5 H350.6" fill="none" stroke="#b4b4b4" stroke-opacity="0.7" stroke-width="1"/>
<path d="M354.6,933 V991.5" fill="none" stroke="#4a4a4a" stroke-width="1.2"/>
<rect x="299.2" y="937" width="49.4" height="30" rx="4" fill="#5c3c6e"/>
<path d="M299.2,963 v-22 q0,-4 4,-4 h41.4 q4,0 4,4" fill="none" stroke="#000" stroke-opacity="0.25" stroke-width="1.2"/>
<text transform="matrix(0.960 0 0 1 304.23 985.40)" font-size="13.1" fill="#262626" font-weight="bold">Purple</text>
<rect x="357.6" y="931" width="62.4" height="60.5" rx="4" fill="url(#bb)"/>
<path d="M358.1,991 V935 Q358.1,931.5 362.1,931.5 H415.6" fill="none" stroke="#b4b4b4" stroke-opacity="0.7" stroke-width="1"/>
<path d="M419.6,933 V991.5" fill="none" stroke="#4a4a4a" stroke-width="1.2"/>
<rect x="364.2" y="937" width="49.4" height="15" rx="4" fill="#a5c341"/>
<path d="M364.2,948 v-7 q0,-4 4,-4 h41.4 q4,0 4,4" fill="none" stroke="#000" stroke-opacity="0.25" stroke-width="1.2"/>
<text transform="matrix(0.960 0 0 1 369.23 970.70)" font-size="13.1" fill="#262626" font-weight="bold">Yellow</text>
<text transform="matrix(0.960 0 0 1 369.23 985.40)" font-size="13.1" fill="#262626" font-weight="bold">Green</text>
<rect x="422.6" y="931" width="62.4" height="60.5" rx="4" fill="url(#bb)"/>
<path d="M423.1,991 V935 Q423.1,931.5 427.1,931.5 H480.6" fill="none" stroke="#b4b4b4" stroke-opacity="0.7" stroke-width="1"/>
<path d="M484.6,933 V991.5" fill="none" stroke="#4a4a4a" stroke-width="1.2"/>
<rect x="429.2" y="937" width="49.4" height="15" rx="4" fill="#e8a532"/>
<path d="M429.2,948 v-7 q0,-4 4,-4 h41.4 q4,0 4,4" fill="none" stroke="#000" stroke-opacity="0.25" stroke-width="1.2"/>
<text transform="matrix(0.960 0 0 1 431.79 970.70)" font-size="13.1" fill="#262626" font-weight="bold">Orange</text>
<text transform="matrix(0.960 0 0 1 431.79 985.40)" font-size="13.1" fill="#262626" font-weight="bold">Yellow</text>
<rect x="487.6" y="931" width="62.4" height="60.5" rx="4" fill="url(#bb)"/>
<path d="M488.1,991 V935 Q488.1,931.5 492.1,931.5 H545.6" fill="none" stroke="#b4b4b4" stroke-opacity="0.7" stroke-width="1"/>
<path d="M549.6,933 V991.5" fill="none" stroke="#4a4a4a" stroke-width="1.2"/>
<rect x="494.2" y="937" width="49.4" height="30" rx="4" fill="#323ca0"/>
<path d="M494.2,963 v-22 q0,-4 4,-4 h41.4 q4,0 4,4" fill="none" stroke="#000" stroke-opacity="0.25" stroke-width="1.2"/>
<text transform="matrix(0.960 0 0 1 505.17 985.40)" font-size="13.1" fill="#262626" font-weight="bold">Blue</text>
<rect x="552.6" y="931" width="62.4" height="60.5" rx="4" fill="url(#bb)"/>
<path d="M553.1,991 V935 Q553.1,931.5 557.1,931.5 H610.6" fill="none" stroke="#b4b4b4" stroke-opacity="0.7" stroke-width="1"/>
<path d="M614.6,933 V991.5" fill="none" stroke="#4a4a4a" stroke-width="1.2"/>
<rect x="559.2" y="937" width="49.4" height="30" rx="4" fill="#46964b"/>
<path d="M559.2,963 v-22 q0,-4 4,-4 h41.4 q4,0 4,4" fill="none" stroke="#000" stroke-opacity="0.25" stroke-width="1.2"/>
<text transform="matrix(0.960 0 0 1 565.63 985.40)" font-size="13.1" fill="#262626" font-weight="bold">Green</text>
<rect x="617.6" y="931" width="62.4" height="60.5" rx="4" fill="url(#bb)"/>
<path d="M618.1,991 V935 Q618.1,931.5 622.1,931.5 H675.6" fill="none" stroke="#b4b4b4" stroke-opacity="0.7" stroke-width="1"/>
<path d="M679.6,933 V991.5" fill="none" stroke="#4a4a4a" stroke-width="1.2"/>
<rect x="624.2" y="937" width="49.4" height="30" rx="4" fill="#b4323a"/>
<path d="M624.2,963 v-22 q0,-4 4,-4 h41.4 q4,0 4,4" fill="none" stroke="#000" stroke-opacity="0.25" stroke-width="1.2"/>
<text transform="matrix(0.960 0 0 1 636.92 985.40)" font-size="13.1" fill="#262626" font-weight="bold">Red</text>
<rect x="682.6" y="931" width="62.4" height="60.5" rx="4" fill="url(#bb)"/>
<path d="M683.1,991 V935 Q683.1,931.5 687.1,931.5 H740.6" fill="none" stroke="#b4b4b4" stroke-opacity="0.7" stroke-width="1"/>
<path d="M744.6,933 V991.5" fill="none" stroke="#4a4a4a" stroke-width="1.2"/>
<rect x="689.2" y="937" width="49.4" height="30" rx="4" fill="#eec823"/>
<path d="M689.2,963 v-22 q0,-4 4,-4 h41.4 q4,0 4,4" fill="none" stroke="#000" stroke-opacity="0.25" stroke-width="1.2"/>
<text transform="matrix(0.960 0 0 1 694.23 985.40)" font-size="13.1" fill="#262626" font-weight="bold">Yellow</text>
<rect x="747.6" y="931" width="62.4" height="60.5" rx="4" fill="url(#bb)"/>
<path d="M748.1,991 V935 Q748.1,931.5 752.1,931.5 H805.6" fill="none" stroke="#b4b4b4" stroke-opacity="0.7" stroke-width="1"/>
<path d="M809.6,933 V991.5" fill="none" stroke="#4a4a4a" stroke-width="1.2"/>
<rect x="754.2" y="937" width="49.4" height="30" rx="4" fill="#be5596"/>
<path d="M754.2,963 v-22 q0,-4 4,-4 h41.4 q4,0 4,4" fill="none" stroke="#000" stroke-opacity="0.25" stroke-width="1.2"/>
<text transform="matrix(0.960 0 0 1 753.29 985.40)" font-size="13.1" fill="#262626" font-weight="bold">Magenta</text>
<rect x="812.6" y="931" width="62.4" height="60.5" rx="4" fill="url(#bb)"/>
<path d="M813.1,991 V935 Q813.1,931.5 817.1,931.5 H870.6" fill="none" stroke="#b4b4b4" stroke-opacity="0.7" stroke-width="1"/>
<path d="M874.6,933 V991.5" fill="none" stroke="#4a4a4a" stroke-width="1.2"/>
<rect x="819.2" y="937" width="49.4" height="30" rx="4" fill="#0087aa"/>
<path d="M819.2,963 v-22 q0,-4 4,-4 h41.4 q4,0 4,4" fill="none" stroke="#000" stroke-opacity="0.25" stroke-width="1.2"/>
<text transform="matrix(0.960 0 0 1 828.42 985.40)" font-size="13.1" fill="#262626" font-weight="bold">Cyan</text>
<rect x="877.6" y="931" width="62.4" height="60.5" rx="4" fill="url(#bb)"/>
<path d="M878.1,991 V935 Q878.1,931.5 882.1,931.5 H935.6" fill="none" stroke="#b4b4b4" stroke-opacity="0.7" stroke-width="1"/>
<path d="M939.6,933 V991.5" fill="none" stroke="#4a4a4a" stroke-width="1.2"/>
<rect x="884.2" y="937" width="49.4" height="30" rx="4" fill="#ff0000"/>
<path d="M884.2,963 v-22 q0,-4 4,-4 h41.4 q4,0 4,4" fill="none" stroke="#000" stroke-opacity="0.25" stroke-width="1.2"/>
<text transform="matrix(0.960 0 0 1 879.09 985.40)" font-size="13.1" fill="#262626" font-weight="bold">100% Red</text>
<rect x="942.6" y="931" width="62.4" height="60.5" rx="4" fill="url(#bb)"/>
<path d="M943.1,991 V935 Q943.1,931.5 947.1,931.5 H1000.6" fill="none" stroke="#b4b4b4" stroke-opacity="0.7" stroke-width="1"/>
<path d="M1004.6,933 V991.5" fill="none" stroke="#4a4a4a" stroke-width="1.2"/>
<rect x="949.2" y="937" width="49.4" height="15" rx="4" fill="#00ff00"/>
<path d="M949.2,948 v-7 q0,-4 4,-4 h41.4 q4,0 4,4" fill="none" stroke="#000" stroke-opacity="0.25" stroke-width="1.2"/>
<text transform="matrix(0.960 0 0 1 955.63 970.70)" font-size="13.1" fill="#262626" font-weight="bold">100%</text>
<text transform="matrix(0.960 0 0 1 955.63 985.40)" font-size="13.1" fill="#262626" font-weight="bold">Green</text>
<rect x="1007.6" y="931" width="62.4" height="60.5" rx="4" fill="url(#bb)"/>
<path d="M1008.1,991 V935 Q1008.1,931.5 1012.1,931.5 H1065.6" fill="none" stroke="#b4b4b4" stroke-opacity="0.7" stroke-width="1"/>
<path d="M1069.6,933 V991.5" fill="none" stroke="#4a4a4a" stroke-width="1.2"/>
<rect x="1014.2" y="937" width="49.4" height="15" rx="4" fill="#0000ff"/>
<path d="M1014.2,948 v-7 q0,-4 4,-4 h41.4 q4,0 4,4" fill="none" stroke="#000" stroke-opacity="0.25" stroke-width="1.2"/>
<text transform="matrix(0.960 0 0 1 1022.72 970.70)" font-size="13.1" fill="#262626" font-weight="bold">100%</text>
<text transform="matrix(0.960 0 0 1 1022.72 985.40)" font-size="13.1" fill="#262626" font-weight="bold">Blue</text>
<rect x="1072.6" y="931" width="62.4" height="60.5" rx="4" fill="url(#bb)"/>
<path d="M1073.1,991 V935 Q1073.1,931.5 1077.1,931.5 H1130.6" fill="none" stroke="#b4b4b4" stroke-opacity="0.7" stroke-width="1"/>
<path d="M1134.6,933 V991.5" fill="none" stroke="#4a4a4a" stroke-width="1.2"/>
<rect x="1079.2" y="937" width="49.4" height="15" rx="4" fill="#00ffff"/>
<path d="M1079.2,948 v-7 q0,-4 4,-4 h41.4 q4,0 4,4" fill="none" stroke="#000" stroke-opacity="0.25" stroke-width="1.2"/>
<text transform="matrix(0.960 0 0 1 1087.72 970.70)" font-size="13.1" fill="#262626" font-weight="bold">100%</text>
<text transform="matrix(0.960 0 0 1 1087.72 985.40)" font-size="13.1" fill="#262626" font-weight="bold">Cyan</text>
<rect x="1137.6" y="931" width="62.4" height="60.5" rx="4" fill="url(#bb)"/>
<path d="M1138.1,991 V935 Q1138.1,931.5 1142.1,931.5 H1195.6" fill="none" stroke="#b4b4b4" stroke-opacity="0.7" stroke-width="1"/>
<path d="M1199.6,933 V991.5" fill="none" stroke="#4a4a4a" stroke-width="1.2"/>
<rect x="1144.2" y="937" width="49.4" height="15" rx="4" fill="#ff00ff"/>
<path d="M1144.2,948 v-7 q0,-4 4,-4 h41.4 q4,0 4,4" fill="none" stroke="#000" stroke-opacity="0.25" stroke-width="1.2"/>
<text transform="matrix(0.960 0 0 1 1143.29 970.70)" font-size="13.1" fill="#262626" font-weight="bold">100%</text>
<text transform="matrix(0.960 0 0 1 1143.29 985.40)" font-size="13.1" fill="#262626" font-weight="bold">Magenta</text>
<rect x="1202.6" y="931" width="62.4" height="60.5" rx="4" fill="url(#bsel)"/>
<rect x="1209.2" y="937" width="49.4" height="15" rx="4" fill="#ffff00"/>
<path d="M1209.2,948 v-7 q0,-4 4,-4 h41.4 q4,0 4,4" fill="none" stroke="#000" stroke-opacity="0.25" stroke-width="1.2"/>
<text transform="matrix(0.960 0 0 1 1214.23 970.70)" font-size="13.1" fill="#fff" font-weight="bold">100%</text>
<text transform="matrix(0.960 0 0 1 1214.23 985.40)" font-size="13.1" fill="#fff" font-weight="bold">Yellow</text>
<rect x="1266.5" y="930" width="59.5" height="77" fill="url(#bb)"/>
<path d="M1266.5,1007 V934 Q1266.5,930 1270.5,930 H1322 Q1326,930 1326,934 V1007Z" fill="url(#bb)"/>
<rect x="1266.5" y="930" width="59.5" height="23" rx="4" fill="#8e8e8e"/>
<line x1="1266.5" y1="953.5" x2="1326" y2="953.5" stroke="#4a4a4a" stroke-width="1"/>
<line x1="1266.5" y1="954.5" x2="1326" y2="954.5" stroke="#9a9a9a" stroke-width="1"/>
<circle cx="1296.4" cy="942" r="9.3" fill="url(#cc)"/>
<path d="M1290.4,945 h12 l-6,-7 z" fill="#333"/>
<rect x="1278" y="962.7" width="36" height="35.5" rx="4" fill="url(#cb)" stroke="#222" stroke-width="2.4"/>
<rect x="1288" y="971.7" width="17" height="17.5" fill="#000"/>
<rect x="1279.2" y="980" width="33.6" height="17" rx="3" fill="#000" fill-opacity="0.18"/>
<rect x="1327.3" y="930" width="56.7" height="37.7" fill="url(#cb)"/>
<circle cx="1355.7" cy="948.7" r="12.4" fill="url(#cc)"/>
<rect x="1385.0" y="930" width="55.5" height="37.7" fill="url(#cb)"/>
<circle cx="1412.8" cy="948.7" r="12.4" fill="url(#cc)"/>
<rect x="1441.5" y="930" width="55.8" height="37.7" fill="url(#cb)"/>
<circle cx="1469.4" cy="948.7" r="12.4" fill="url(#cc)"/>
<rect x="1498.3" y="930" width="55.3" height="37.7" fill="url(#cb)"/>
<circle cx="1525.9" cy="948.7" r="12.4" fill="url(#cc)"/>
<rect x="1554.6" y="930" width="55.1" height="37.7" fill="#383838"/>
<circle cx="1582.2" cy="948.7" r="12.4" fill="#2c2c2c"/>
<rect x="1610.7" y="930" width="54.8" height="37.7" fill="url(#cb)"/>
<circle cx="1640.0" cy="948.7" r="12.4" fill="url(#cc)"/>
<rect x="1327.3" y="969" width="170" height="38" fill="url(#cb)"/>
<rect x="1498.8" y="969" width="167.7" height="38" fill="url(#cb)"/>
<rect x="1666.5" y="930" width="3" height="77" fill="#3c3c3c"/>
<path d="M1327.3,930.5H1666" stroke="#c4c4c4" stroke-opacity="0.6" fill="none"/>
<path d="M1327.3,969.5H1666" stroke="#c4c4c4" stroke-opacity="0.6" fill="none"/>
<rect x="1351.3" y="944" width="9.6" height="9.6" fill="#333"/>
<path d="M1410.5,943 v11.5 l10,-5.75 z" fill="#333"/>
<path d="M1466.8,943 h-3 v11.4 h3 M1473.2,943 h3 v11.4 h-3" stroke="#333" stroke-width="2.1" fill="none"/>
<path d="M1466.6,948.7h1.6 M1469.2,948.7 h1.6 M1471.8,948.7h1.6" stroke="#333" stroke-width="1.7" fill="none"/>
<text transform="matrix(1.280 0 0 1 1517.65 954.30)" font-size="20.0" fill="#3a3a3a">∞</text>
<g transform="translate(1582.6,948.7)" fill="none" stroke="#1c1c1c" stroke-width="2.6"><path d="M-6,-1.5 A6.2,6.2 0 0 1 5,-3.5"/><path d="M6,1.5 A6.2,6.2 0 0 1 -5,3.5"/><path d="M6.5,-7 v4.5 h-4.5 z M-6.5,7 v-4.5 h4.5 z" fill="#1c1c1c" stroke="none"/></g>
<circle cx="1365.8" cy="988.3" r="12.2" fill="url(#cc)"/>
<circle cx="1632.5" cy="988.3" r="12.2" fill="url(#cc)"/>
<path d="M1364.5,983 l-4.5,5.3 l4.5,5.3 M1370.5,983 l-4.5,5.3 l4.5,5.3" stroke="#3a3a3a" stroke-width="2.3" fill="none"/>
<path d="M1628,983 l4.5,5.3 l-4.5,5.3 M1634,983 l4.5,5.3 l-4.5,5.3" stroke="#3a3a3a" stroke-width="2.3" fill="none"/>
<text x="1400.10" y="997.60" font-size="27.8" fill="#363636" stroke="#363636" stroke-width="0.85">Back</text>
<text transform="matrix(1.124 0 0 1 1533.30 997.60)" font-size="27.8" fill="#363636" stroke="#363636" stroke-width="0.85">Next</text>
</svg>
<div id="cie" style="position:absolute;left:1019px;top:121px;width:639px;height:492px;overflow:hidden">
<div class="cg" style="clip-path:polygon(273.1px 476.4px,273.0px 476.4px,273.0px 476.4px,273.0px 476.4px,272.9px 476.4px,272.9px 476.5px,272.8px 476.6px,272.8px 476.7px,272.7px 476.7px,272.6px 476.7px,272.5px 476.7px,272.4px 476.7px,272.3px 476.7px,272.2px 476.8px,272.1px 476.8px,272.0px 476.9px,271.9px 477.0px,271.8px 477.0px,271.7px 477.0px,271.6px 477.0px,271.4px 477.0px,271.3px 477.0px,271.1px 477.0px,270.9px 477.0px,270.7px 477.0px,270.5px 477.0px,270.3px 477.0px,270.1px 477.0px,269.9px 477.0px,269.6px 476.9px,269.3px 476.8px,268.9px 476.6px,268.4px 476.3px,267.9px 476.0px,267.2px 475.6px,266.5px 475.1px,265.8px 474.6px,265.0px 474.0px,264.2px 473.4px,263.3px 472.7px,262.3px 471.9px,261.2px 471.0px,259.9px 470.1px,258.6px 469.0px,257.2px 467.8px,255.7px 466.6px,254.1px 465.2px,252.4px 463.8px,250.7px 462.3px,248.8px 460.7px,246.9px 459.1px,244.8px 457.4px,242.6px 455.5px,240.2px 453.6px,237.6px 451.4px,234.8px 449.2px,231.9px 446.8px,228.9px 444.3px,225.7px 441.7px,222.5px 439.0px,219.0px 436.1px,215.3px 432.9px,211.5px 429.5px,207.4px 425.9px,203.2px 422.0px,198.8px 417.9px,194.3px 413.5px,189.5px 408.8px,184.4px 403.4px,178.9px 397.4px,172.9px 390.5px,166.5px 382.9px,159.7px 374.5px,152.6px 365.4px,145.2px 355.6px,137.6px 345.1px,129.7px 333.9px,121.7px 322.0px,113.5px 309.3px,105.1px 296.1px,96.7px 282.3px,88.3px 268.2px,79.9px 253.9px,71.7px 239.4px,63.7px 224.8px,56.2px 210.3px,49.2px 195.9px,42.6px 181.8px,36.6px 168.0px,31.1px 154.7px,26.0px 141.9px,21.5px 129.8px,17.5px 118.3px,13.9px 107.6px,11.0px 97.7px,8.5px 88.6px,6.5px 80.2px,4.9px 72.5px,3.8px 65.5px,3.0px 59.1px,2.6px 53.2px,2.6px 47.9px,2.9px 43.0px,3.5px 38.6px,4.4px 34.6px,5.7px 30.9px,7.2px 27.6px,9.1px 24.7px,11.1px 22.2px,13.5px 20.0px,16.0px 18.1px,18.7px 16.6px,21.6px 15.3px,24.6px 14.3px,27.8px 13.5px,31.1px 12.9px,34.5px 12.4px,38.0px 12.1px,41.5px 11.8px,45.2px 11.7px,48.9px 11.6px,52.6px 11.5px,56.3px 11.5px,60.0px 11.5px,63.8px 11.5px,67.5px 11.6px,71.3px 11.7px,75.1px 11.9px,79.0px 12.1px,83.0px 12.3px,87.0px 12.5px,91.1px 12.8px,95.3px 13.1px,99.6px 13.4px,104.0px 13.8px,108.4px 14.2px,113.0px 14.6px,117.6px 15.0px,122.4px 15.5px,127.3px 16.0px,132.3px 16.5px,137.4px 17.0px,142.7px 17.6px,148.1px 18.1px,153.6px 18.7px,159.3px 19.3px,165.1px 20.0px,171.0px 20.6px,177.2px 21.3px,183.4px 22.0px,189.8px 22.7px,196.4px 23.5px,203.2px 24.3px,210.1px 25.0px,217.2px 25.8px,224.5px 26.7px,231.9px 27.5px,239.5px 28.4px,247.3px 29.3px,255.2px 30.2px,263.3px 31.1px,271.6px 32.1px,280.0px 33.1px,288.6px 34.1px,297.4px 35.1px,306.2px 36.1px,315.3px 37.1px,324.4px 38.2px,333.7px 39.2px,343.0px 40.3px,352.5px 41.4px,362.1px 42.5px,371.7px 43.6px,381.3px 44.7px,390.8px 45.8px,400.2px 46.9px,409.4px 48.0px,418.7px 49.0px,427.9px 50.1px,437.0px 51.1px,446.2px 52.2px,455.2px 53.2px,464.0px 54.2px,472.6px 55.2px,480.9px 56.2px,489.0px 57.1px,496.8px 58.0px,504.4px 58.9px,511.8px 59.7px,519.0px 60.5px,525.9px 61.3px,532.5px 62.1px,538.8px 62.8px,544.9px 63.5px,550.7px 64.2px,556.3px 64.8px,561.6px 65.5px,566.7px 66.0px,571.5px 66.6px,576.2px 67.1px,580.7px 67.6px,585.0px 68.1px,589.1px 68.6px,593.1px 69.1px,597.0px 69.5px,600.8px 70.0px,604.4px 70.4px,607.8px 70.8px,611.1px 71.2px,614.3px 71.5px,617.3px 71.9px,620.2px 72.2px,622.9px 72.5px,625.5px 72.8px,627.9px 73.1px,630.2px 73.3px,632.3px 73.6px,634.3px 73.8px,636.2px 74.0px,637.9px 74.2px,639.6px 74.4px,641.1px 74.6px,642.6px 74.8px,644.0px 74.9px,645.2px 75.1px,646.4px 75.2px,647.5px 75.3px,648.5px 75.4px,649.3px 75.5px,650.1px 75.6px,650.9px 75.7px,651.5px 75.8px,652.2px 75.9px,652.8px 75.9px,653.3px 76.0px,653.8px 76.1px,654.4px 76.1px,654.9px 76.2px,655.4px 76.2px,655.9px 76.3px,656.4px 76.4px,656.8px 76.4px,657.3px 76.5px,657.7px 76.5px,658.2px 76.6px,658.6px 76.6px,658.9px 76.7px,659.3px 76.7px,659.7px 76.7px,660.0px 76.8px,660.3px 76.8px,660.5px 76.8px,660.8px 76.9px,660.9px 76.9px,661.1px 76.9px,661.2px 76.9px,661.3px 76.9px,661.4px 76.9px,661.4px 76.9px,661.4px 76.9px)">
<i style="top:10px;left:38px;width:40px;background:linear-gradient(90deg,#0f0 0px,#0f0 40px)"></i>
<i style="top:12px;left:25px;width:82px;background:linear-gradient(90deg,#0f0 0px,#0f0 82px)"></i>
<i style="top:14px;left:19px;width:110px;background:linear-gradient(90deg,#0f0 0px,#0f0 110px)"></i>
<i style="top:16px;left:15px;width:133px;background:linear-gradient(90deg,#0f0 0px,#01ff00 116px,#29ff00 133px)"></i>
<i style="top:18px;left:12px;width:154px;background:linear-gradient(90deg,#0f0 0px,#02ff00 120px,#57ff00 154px)"></i>
<i style="top:20px;left:10px;width:174px;background:linear-gradient(90deg,#00ff04 0px,#0f0 42px,#02ff00 122px,#4f0 149px,#8bff00 174px)"></i>
<i style="top:22px;left:8px;width:194px;background:linear-gradient(90deg,#00ff07 0px,#0f0 63px,#01ff00 124px,#51ff00 156px,#a0ff00 183px,#c5ff00 194px)"></i>
<i style="top:24px;left:7px;width:213px;background:linear-gradient(90deg,#00ff0b 0px,#0f0 81px,#0f0 125px,#4eff00 156px,#9aff00 182px,#ecff00 206px,#ff0 211px,#fff800 213px)"></i>
<i style="top:26px;left:6px;width:231px;background:linear-gradient(90deg,#00ff0e 0px,#0f0 105px,#02ff00 127px,#50ff00 158px,#af0 188px,#fffe00 212px,#ffd000 226px,#ffc300 231px)"></i>
<i style="top:28px;left:5px;width:249px;background:linear-gradient(90deg,#0f1 0px,#0f0 126px,#06ff00 130px,#4dff00 158px,#af0 189px,#fffe00 213px,#ffd200 226px,#ffa900 243px,#ff9d00 249px)"></i>
<i style="top:30px;left:4px;width:268px;background:linear-gradient(90deg,#00ff15 0px,#00ff02 129px,#4aff00 158px,#a7ff00 189px,#fffd00 214px,#ffd500 226px,#ffae00 241px,#ff8700 262px,#ff7e00 268px)"></i>
<i style="top:32px;left:3px;width:286px;background:linear-gradient(90deg,#00ff18 0px,#00ff07 127px,#02ff06 131px,#4cff00 160px,#a7ff00 190px,#feff00 214px,#ffcb00 230px,#ffa100 248px,#ff7c00 270px,#ff6800 286px)"></i>
<i style="top:34px;left:3px;width:304px;background:linear-gradient(90deg,#00ff1c 0px,#01ff0a 131px,#4cff05 160px,#a4ff00 189px,#f7ff00 212px,#ff0 214px,#ffcd00 229px,#ffa200 247px,#ff7a00 271px,#ff5800 300px,#f50 304px)"></i>
<i style="top:36px;left:2px;width:322px;background:linear-gradient(90deg,#00ff1f 0px,#00ff0f 132px,#54ff09 164px,#a4ff03 190px,#f4ff00 212px,#ff0 215px,#ffcf00 229px,#ffa800 245px,#ff8300 265px,#ff6000 293px,#ff4600 322px)"></i>
<i style="top:38px;left:2px;width:339px;background:linear-gradient(90deg,#0f2 0px,#00ff14 130px,#04ff13 134px,#5cff0d 167px,#abff08 192px,#fffe02 215px,#ffd100 228px,#ffa700 245px,#ff8400 264px,#ff6000 292px,#ff4000 329px,#ff3a00 339px)"></i>
<i style="top:40px;left:2px;width:357px;background:linear-gradient(90deg,#00ff26 0px,#01ff18 133px,#50ff13 163px,#a1ff0e 189px,#f9ff09 213px,#fff908 216px,#ffcb04 230px,#ffa400 246px,#ff8000 266px,#ff5b00 296px,#ff3c00 334px,#ff2f00 357px)"></i>
<i style="top:42px;left:1px;width:375px;background:linear-gradient(90deg,#00ff29 0px,#01ff1c 134px,#42ff19 159px,#97ff14 187px,#eaff0f 210px,#feff0e 215px,#ffcd09 230px,#ffa304 247px,#ff7e00 268px,#ff5e00 294px,#ff4300 324px,#ff2600 374px,#ff2600 375px)"></i>
<i style="top:44px;left:1px;width:392px;background:linear-gradient(90deg,#00ff2d 0px,#02ff21 135px,#4dff1d 163px,#97ff19 187px,#eeff15 211px,#feff14 215px,#ffcf0e 229px,#ffa208 247px,#ff7a03 270px,#ff5700 300px,#ff3a00 336px,#ff1e00 392px)"></i>
<i style="top:46px;left:1px;width:410px;background:linear-gradient(90deg,#00ff30 0px,#01ff26 135px,#52ff22 165px,#a1ff1f 190px,#fbff1b 214px,#fffb1a 216px,#ffcb13 230px,#ffa60d 245px,#ff8408 263px,#ff6303 288px,#ff4700 317px,#ff2a00 363px,#ff1600 410px)"></i>
<i style="top:48px;left:1px;width:427px;background:linear-gradient(90deg,#00ff34 0px,#01ff2a 135px,#49ff28 162px,#97ff25 187px,#e8ff21 209px,#fffe20 215px,#ffcd18 229px,#ffa311 246px,#ff7d0b 267px,#ff5d05 293px,#ff4101 324px,#ff2400 374px,#ff1000 427px)"></i>
<i style="top:50px;left:1px;width:445px;background:linear-gradient(90deg,#00ff37 0px,#02ff2f 136px,#54ff2c 166px,#a5ff2a 191px,#f8ff27 213px,#fffd26 215px,#ffd31f 227px,#ffa817 243px,#ff810f 264px,#ff5f09 290px,#ff4104 323px,#ff2400 373px,#ff0c00 441px,#ff0b00 445px)"></i>
<i style="top:52px;left:1px;width:462px;background:linear-gradient(90deg,#00ff3b 0px,#01ff34 136px,#51ff32 165px,#9eff30 189px,#f5ff2d 212px,#fffd2d 215px,#ffd524 226px,#ffac1c 241px,#ff8314 262px,#ff620d 287px,#ff4507 317px,#ff2701 365px,#ff0e00 432px,#ff0600 462px)"></i>
<i style="top:54px;left:1px;width:479px;background:linear-gradient(90deg,#00ff3f 0px,#01ff39 136px,#45ff38 161px,#8dff36 184px,#deff34 206px,#feff33 214px,#ffce28 228px,#ffa720 243px,#ff8418 261px,#ff6010 288px,#ff4209 320px,#ff2503 368px,#ff0d00 434px,#ff0200 479px)"></i>
<i style="top:56px;left:1px;width:497px;background:linear-gradient(90deg,#00ff42 0px,#02ff3e 137px,#56ff3d 167px,#a9ff3b 192px,#f7ff3a 212px,#ffff3a 214px,#ffd02f 227px,#ffa624 243px,#ff831c 261px,#ff5f13 288px,#ff3f0b 323px,#ff2304 372px,#ff0c00 436px,#f00 491px,#f00 497px)"></i>
<i style="top:58px;left:1px;width:514px;background:linear-gradient(90deg,#00ff46 0px,#02ff43 137px,#44ff43 161px,#8dff42 184px,#dfff41 206px,#fffe40 214px,#ffcf34 227px,#ffa529 243px,#ff7f1f 263px,#ff5b15 291px,#ff3d0d 325px,#ff2206 373px,#ff0b00 438px,#f00 489px,#f00 514px)"></i>
<i style="top:60px;left:2px;width:531px;background:linear-gradient(90deg,#00ff4a 0px,#01ff48 136px,#4fff48 164px,#a2ff48 189px,#f8ff47 211px,#fffe47 213px,#ffd83c 223px,#ffb031 237px,#ff8023 261px,#ff5f1a 286px,#ff4312 315px,#ff260a 362px,#ff0e03 425px,#f00 485px,#f00 531px)"></i>
<i style="top:62px;left:2px;width:548px;background:linear-gradient(90deg,#00ff4d 0px,#00ff4e 136px,#49ff4e 162px,#94ff4e 185px,#e8ff4e 207px,#fffd4d 213px,#ffd140 225px,#ffaa34 239px,#ff7f27 261px,#ff5d1c 287px,#ff4014 318px,#ff240b 365px,#ff0c04 430px,#f00 484px,#f00 548px)"></i>
<i style="top:64px;left:2px;width:565px;background:linear-gradient(90deg,#00ff51 0px,#02ff53 137px,#4eff54 164px,#a6ff54 190px,#feff55 212px,#ffcd44 226px,#ffa537 241px,#ff802b 260px,#ff5c20 287px,#ff3e16 320px,#ff230d 366px,#ff0c06 428px,#ff0001 482px,#f00 565px)"></i>
<i style="top:66px;left:2px;width:583px;background:linear-gradient(90deg,#0f5 0px,#01ff58 137px,#4bff59 163px,#94ff5a 185px,#edff5b 208px,#ffff5c 212px,#ffd24c 224px,#ffab3f 238px,#ff7f2f 260px,#ff5a23 288px,#ff3b18 323px,#ff200e 371px,#ff0906 437px,#ff0003 482px,#f00 581px,#f00 583px)"></i>
<i style="top:68px;left:3px;width:599px;background:linear-gradient(90deg,#00ff59 0px,#00ff5e 136px,#4aff5f 162px,#9fff61 187px,#ffff62 211px,#ffd854 221px,#ffaf45 235px,#ff8c39 251px,#ff652a 277px,#ff411d 313px,#ff2412 360px,#ff0c09 424px,#ff0004 477px,#f00 593px,#f00 599px)"></i>
<i style="top:70px;left:3px;width:616px;background:linear-gradient(90deg,#00ff5d 0px,#02ff63 137px,#53ff65 165px,#aeff68 191px,#fffe69 211px,#ffd75a 221px,#ffae4a 235px,#ff883b 253px,#ff642d 277px,#ff4220 311px,#ff2615 355px,#ff0e0c 416px,#ff0006 474px,#f00 597px,#f00 616px)"></i>
<i style="top:72px;left:3px;width:634px;background:linear-gradient(90deg,#00ff61 0px,#01ff69 137px,#46ff6b 161px,#9bff6e 186px,#f8ff71 209px,#fffd70 211px,#ffd35f 222px,#ffad4f 235px,#ff853f 254px,#ff6130 279px,#ff3f22 314px,#ff2317 360px,#ff0b0d 424px,#ff0007 473px,#f00 618px,#f00 634px)"></i>
<i style="top:74px;left:4px;width:635px;background:linear-gradient(90deg,#00ff65 0px,#00ff6f 136px,#4fff72 163px,#a7ff75 188px,#f0ff78 206px,#fdff78 209px,#ffc861 224px,#ff9e4e 240px,#ff773d 261px,#ff542e 289px,#ff3722 323px,#ff1d16 371px,#ff050c 443px,#ff0009 474px,#f00 627px,#f00 635px)"></i>
<i style="top:76px;left:4px;width:635px;background:linear-gradient(90deg,#00ff69 0px,#02ff74 137px,#52ff78 164px,#a3ff7c 187px,#feff80 209px,#ffd16b 221px,#ffa958 235px,#ff7b44 258px,#ff5b35 282px,#ff3f28 311px,#ff201a 362px,#ff070e 434px,#ff000b 470px,#f00 635px)"></i>
<i style="top:78px;left:5px;width:634px;background:linear-gradient(90deg,#00ff6d 0px,#01ff7a 136px,#52ff7e 163px,#a3ff83 186px,#f6ff87 206px,#ffff87 208px,#ffd071 220px,#ffa85e 234px,#ff7a48 257px,#ff5938 282px,#ff3c2a 313px,#ff1f1c 362px,#ff0710 431px,#ff000c 467px,#ff0001 634px)"></i>
<i style="top:80px;left:5px;width:634px;background:linear-gradient(90deg,#00ff71 0px,#00ff7f 132px,#00ff80 136px,#51ff85 163px,#abff8a 188px,#fffe8e 208px,#ffcf77 220px,#ffa260 236px,#ff794c 257px,#ff573a 283px,#ff3a2c 315px,#ff1d1e 365px,#ff0511 437px,#ff000e 467px,#ff0002 630px,#ff0002 634px)"></i>
<i style="top:82px;left:6px;width:633px;background:linear-gradient(90deg,#00ff75 0px,#00ff85 131px,#02ff86 136px,#54ff8c 163px,#abff91 187px,#fffd96 207px,#ffce7d 219px,#ffa165 235px,#ff7a51 255px,#ff563e 282px,#ff372e 317px,#ff1c1f 366px,#ff0513 434px,#ff000f 464px,#ff0003 633px)"></i>
<i style="top:84px;left:6px;width:633px;background:linear-gradient(90deg,#00ff79 0px,#00ff8a 126px,#01ff8c 136px,#4dff92 161px,#9cff97 183px,#efff9d 203px,#fdff9e 206px,#ffca81 220px,#ff9e69 236px,#ff7955 255px,#ff5943 279px,#ff3d34 308px,#ff2024 355px,#ff0817 421px,#f01 459px,#ff0004 632px,#ff0004 633px)"></i>
<i style="top:86px;left:6px;width:633px;background:linear-gradient(90deg,#00ff7d 0px,#00ff90 127px,#00ff92 136px,#49ff98 160px,#9cff9f 183px,#e7ffa4 201px,#feffa6 206px,#ffcc89 219px,#ffa271 234px,#ff7859 255px,#ff5746 280px,#ff3a36 311px,#ff1e25 359px,#ff0718 423px,#ff0013 458px,#ff0005 626px,#ff0004 633px)"></i>
<i style="top:88px;left:7px;width:632px;background:linear-gradient(90deg,#00ff82 0px,#00ff93 112px,#02ff99 136px,#4cff9f 160px,#a4ffa7 184px,#f1ffad 202px,#ffffae 205px,#ffcf92 217px,#ffa378 232px,#ff795e 253px,#ff574a 278px,#ff3737 313px,#ff1c27 361px,#ff0619 424px,#ff0015 455px,#ff0008 595px,#ff0005 632px)"></i>
<i style="top:90px;left:7px;width:632px;background:linear-gradient(90deg,#00ff86 0px,#0f9 113px,#01ff9f 136px,#4fffa6 161px,#a0ffae 183px,#edffb5 201px,#fffeb6 205px,#ffce98 217px,#ffa27d 232px,#ff7863 253px,#ff544c 280px,#ff373a 312px,#ff1b28 362px,#ff051b 426px,#ff0016 454px,#ff0008 612px,#ff0006 632px)"></i>
<i style="top:92px;left:8px;width:631px;background:linear-gradient(90deg,#00ff8a 0px,#00ff9f 112px,#00ffa5 135px,#4bffad 159px,#9cffb5 181px,#f7ffbe 202px,#fffdbe 204px,#ffcd9f 216px,#ffa484 230px,#ff7e6b 248px,#ff5b55 272px,#ff3a3f 306px,#ff1e2d 353px,#ff071e 415px,#ff0018 450px,#ff0009 608px,#ff0007 631px)"></i>
<i style="top:94px;left:9px;width:630px;background:linear-gradient(90deg,#00ff8f 0px,#00ffa4 108px,#02ffac 135px,#55ffb5 161px,#a8ffbe 183px,#fdffc7 202px,#ffcca5 215px,#ffa389 229px,#ff7d70 247px,#ff5958 272px,#ff3b43 303px,#ff1f31 348px,#ff0720 413px,#ff001a 446px,#ff000b 594px,#ff0008 630px)"></i>
<i style="top:96px;left:9px;width:630px;background:linear-gradient(90deg,#00ff93 0px,#00ffa9 104px,#01ffb3 135px,#51ffbc 160px,#a4ffc6 182px,#feffd0 202px,#ffcbac 215px,#ffa28f 229px,#ff7c74 247px,#ff5b5d 270px,#ff3b47 302px,#ff2034 345px,#ff0823 407px,#ff001c 444px,#ff000d 582px,#ff0009 630px)"></i>
<i style="top:98px;left:10px;width:629px;background:linear-gradient(90deg,#00ff98 0px,#00ffad 96px,#00ffb9 134px,#4dffc3 158px,#a0ffcd 180px,#faffd8 200px,#ffffd9 201px,#ffd1b7 212px,#ffa194 228px,#ff7373 251px,#ff535c 275px,#ff3546 308px,#ff1a32 355px,#ff0321 423px,#ff001c 453px,#ff000d 594px,#ff000a 629px)"></i>
<i style="top:100px;left:10px;width:629px;background:linear-gradient(90deg,#00ff9c 0px,#00ffb6 106px,#02ffc1 135px,#57ffcc 161px,#adffd7 183px,#ffffe1 201px,#ffd8c4 210px,#ffb0a6 222px,#ff8a89 238px,#ff6a71 256px,#ff4b5a 282px,#ff3046 314px,#ff1531 365px,#ff0021 434px,#f01 558px,#ff000b 629px)"></i>
<i style="top:102px;left:11px;width:627px;background:linear-gradient(90deg,#00ffa1 0px,#00ffb9 96px,#01ffc7 134px,#57ffd3 160px,#a5ffde 180px,#f2ffe9 197px,#fffee9 200px,#ffd7cb 209px,#ffafac 221px,#ff898e 237px,#ff6875 256px,#ff485b 283px,#ff2c46 318px,#ff1231 371px,#ff0023 433px,#ff0014 539px,#ff000c 627px)"></i>
<i style="top:104px;left:11px;width:625px;background:linear-gradient(90deg,#00ffa6 0px,#00ffbc 87px,#01ffce 134px,#48ffd9 156px,#98ffe5 177px,#f7fff2 198px,#fffdf2 200px,#ffd2cf 210px,#ffabb0 222px,#ff8691 238px,#ff6375 259px,#ff425b 288px,#ff2443 330px,#ff0b2e 389px,#ff0024 434px,#ff0014 551px,#ff000d 625px)"></i>
<i style="top:106px;left:12px;width:622px;background:linear-gradient(90deg,#00ffab 0px,#00ffc1 83px,#00ffd5 133px,#44ffe0 154px,#94ffec 175px,#e5fff9 193px,#fdfffd 198px,#ffcdd3 210px,#ff9dab 226px,#ff798d 243px,#ff556f 268px,#ff3857 298px,#ff1d40 341px,#ff052c 405px,#ff0025 435px,#ff0014 560px,#ff000e 622px)"></i>
<i style="top:108px;left:13px;width:619px;background:linear-gradient(90deg,#00ffb0 0px,#00ffc6 79px,#02ffdd 133px,#47ffe8 154px,#94fff5 174px,#dffdff 191px,#fff6fe 199px,#ffccda 209px,#ffa1b5 223px,#ff7a93 241px,#ff5876 264px,#ff3b5c 293px,#ff2046 333px,#ff0a32 388px,#ff0028 428px,#ff0017 542px,#ff0010 619px)"></i>
<i style="top:110px;left:13px;width:617px;background:linear-gradient(90deg,#00ffb4 0px,#00ffce 84px,#01ffe4 133px,#4afff1 155px,#a8fdff 179px,#ffecfe 201px,#ffc4db 211px,#ff9bb6 225px,#ff7190 246px,#f57 266px,#ff355b 299px,#ff1a43 344px,#ff032e 408px,#ff0028 438px,#ff0018 544px,#f01 617px)"></i>
<i style="top:112px;left:14px;width:614px;background:linear-gradient(90deg,#00ffb9 0px,#00ffd5 85px,#00ffec 132px,#46fff8 153px,#77fdff 166px,#f0e5ff 198px,#ffe2fe 202px,#ffb9d9 213px,#ff93b6 227px,#ff7398 243px,#ff547b 265px,#ff355f 297px,#ff1b47 340px,#ff0432 400px,#ff002b 430px,#ff001a 534px,#ff0012 614px)"></i>
<i style="top:114px;left:15px;width:612px;background:linear-gradient(90deg,#00ffbe 0px,#00ffda 81px,#02fff4 132px,#49fdff 153px,#cae3ff 189px,#ffd8fe 203px,#ffafd7 215px,#ff8bb5 229px,#ff6a95 247px,#ff4a77 272px,#ff2f5d 303px,#ff1443 353px,#ff002f 416px,#ff001c 527px,#ff0013 612px)"></i>
<i style="top:116px;left:15px;width:610px;background:linear-gradient(90deg,#00ffc3 0px,#00ffe0 81px,#01fffb 132px,#28fbff 144px,#a7e2ff 181px,#ffcfff 205px,#ffabda 216px,#ff86b6 231px,#ff6394 251px,#ff4374 278px,#ff2759 314px,#ff0e40 367px,#ff0031 416px,#ff001f 515px,#ff0014 610px)"></i>
<i style="top:118px;left:16px;width:607px;background:linear-gradient(90deg,#00ffc9 0px,#00ffe2 70px,#00fdff 128px,#00fbff 131px,#7fe1ff 170px,#ffc7ff 206px,#ffa1d8 218px,#ff79af 236px,#ff558b 260px,#ff346a 293px,#ff1b4f 335px,#ff063a 388px,#f03 416px,#f02 502px,#ff0015 607px)"></i>
<i style="top:120px;left:17px;width:604px;background:linear-gradient(90deg,#00ffce 0px,#00ffea 73px,#00fdff 115px,#02f3ff 131px,#85d8ff 172px,#ffbfff 207px,#ff98d6 220px,#ff73af 238px,#ff548f 259px,#ff3871 287px,#ff1d56 327px,#ff083f 379px,#ff0035 412px,#ff0021 515px,#ff0017 604px)"></i>
<i style="top:122px;left:17px;width:602px;background:linear-gradient(90deg,#00ffd3 0px,#00fff0 72px,#00fdff 103px,#01ecff 131px,#81d1ff 172px,#ffb7ff 209px,#ff90d5 223px,#ff6dae 241px,#ff4e8e 263px,#ff2e6b 298px,#ff1550 343px,#ff013a 401px,#ff0026 491px,#ff0018 602px)"></i>
<i style="top:124px;left:18px;width:599px;background:linear-gradient(90deg,#00ffd8 0px,#00fff7 72px,#00fdff 90px,#00e5ff 130px,#8dc8ff 176px,#ffafff 210px,#ff8ad5 224px,#ff65ac 244px,#ff4689 269px,#ff2c6d 299px,#ff1553 340px,#ff003b 403px,#ff0027 493px,#ff0019 599px)"></i>
<i style="top:126px;left:19px;width:596px;background:linear-gradient(90deg,#00ffde 0px,#00fffd 70px,#00efff 102px,#02deff 130px,#9cbdff 181px,#ffa8ff 211px,#ff85d6 225px,#ff64b1 243px,#ff478f 266px,#ff2b70 298px,#ff1556 338px,#ff003e 398px,#ff002a 483px,#ff001a 596px)"></i>
<i style="top:128px;left:20px;width:593px;background:linear-gradient(90deg,#00ffe4 0px,#00fdff 64px,#01d8ff 129px,#85bcff 174px,#ffa1ff 212px,#ff80d7 226px,#ff60b2 244px,#ff4592 266px,#ff2971 299px,#ff1154 345px,#ff003f 398px,#ff002a 489px,#ff001b 593px)"></i>
<i style="top:130px;left:20px;width:591px;background:linear-gradient(90deg,#00ffe9 0px,#00fdff 52px,#00d2ff 129px,#82b6ff 174px,#ff9bff 214px,#ff7cda 227px,#ff58ae 249px,#ff3c8c 274px,#ff236d 308px,#ff0c51 356px,#ff0041 398px,#ff002c 486px,#ff001d 591px)"></i>
<i style="top:132px;left:21px;width:588px;background:linear-gradient(90deg,#00ffef 0px,#00fdff 40px,#02ccff 129px,#84afff 175px,#ff94ff 215px,#ff76d8 229px,#ff5ab6 246px,#ff3e93 270px,#ff2472 304px,#ff0d56 350px,#f04 395px,#ff002f 476px,#ff001e 588px)"></i>
<i style="top:134px;left:22px;width:585px;background:linear-gradient(90deg,#00fff5 0px,#00fdff 27px,#01c7ff 128px,#89a8ff 177px,#ff8eff 216px,#ff6dd4 232px,#ff4fad 253px,#ff368e 277px,#ff2172 307px,#ff0a55 355px,#ff0046 393px,#ff0031 472px,#ff001f 585px)"></i>
<i style="top:136px;left:22px;width:583px;background:linear-gradient(90deg,#00fffa 0px,#00fdff 15px,#00c3ff 125px,#00c1ff 128px,#80a5ff 175px,#f8f 218px,#ff69d5 234px,#ff4bae 255px,#ff328d 281px,#ff1d71 312px,#ff0754 362px,#ff0048 392px,#ff0032 474px,#ff0021 583px)"></i>
<i style="top:138px;left:23px;width:580px;background:linear-gradient(90deg,#00feff 0px,#00c3ff 115px,#02bcff 128px,#859eff 177px,#ff83ff 219px,#ff66d8 234px,#ff4ab2 254px,#ff308e 282px,#ff1970 317px,#ff0757 360px,#ff004b 389px,#ff0035 466px,#ff0023 574px,#f02 580px)"></i>
<i style="top:140px;left:24px;width:577px;background:linear-gradient(90deg,#00f8ff 0px,#00b9ff 123px,#03b6ff 128px,#9296ff 182px,#ff7dff 220px,#ff5dd2 238px,#ff41aa 261px,#ff2787 291px,#ff136a 328px,#ff0050 380px,#ff003a 450px,#ff0027 551px,#ff0023 577px)"></i>
<i style="top:142px;left:25px;width:574px;background:linear-gradient(90deg,#00f2ff 0px,#00b6ff 119px,#00b2ff 126px,#8195ff 176px,#ff78ff 221px,#ff5cd7 237px,#ff42b1 258px,#ff288c 288px,#ff116c 328px,#ff0051 380px,#ff0039 459px,#ff0026 565px,#ff0025 574px)"></i>
<i style="top:144px;left:26px;width:571px;background:linear-gradient(90deg,#00edff 0px,#02adff 126px,#838fff 177px,#ff73ff 222px,#ff5ada 237px,#ff41b5 257px,#ff2992 285px,#ff1473 320px,#ff0056 373px,#ff003d 448px,#ff002a 545px,#ff0026 571px)"></i>
<i style="top:146px;left:26px;width:569px;background:linear-gradient(90deg,#00e8ff 0px,#01a9ff 126px,#9287ff 184px,#ff6eff 224px,#ff53d6 241px,#ff3ab0 263px,#ff248f 291px,#ff1071 327px,#ff0057 375px,#ff003e 450px,#ff002b 546px,#ff0027 569px)"></i>
<i style="top:148px;left:27px;width:567px;background:linear-gradient(90deg,#00e2ff 0px,#00acff 111px,#02a4ff 126px,#8785ff 180px,#ff69ff 225px,#ff4ed5 243px,#ff37b1 264px,#ff208e 294px,#ff0d70 331px,#ff005a 373px,#f04 433px,#ff0030 521px,#ff0029 567px)"></i>
<i style="top:150px;left:28px;width:564px;background:linear-gradient(90deg,#0df 0px,#00a2ff 121px,#02a0ff 125px,#8182ff 178px,#ff65ff 226px,#ff49d3 245px,#ff30ab 270px,#ff1b89 301px,#ff076a 344px,#ff005c 372px,#ff0045 434px,#ff0031 522px,#ff002a 564px)"></i>
<i style="top:152px;left:29px;width:561px;background:linear-gradient(90deg,#00d8ff 0px,#009dff 122px,#059bff 126px,#9779ff 187px,#ff60ff 227px,#ff47d6 245px,#ff30b0 268px,#ff198b 301px,#ff066b 345px,#ff005f 369px,#ff0048 428px,#ff0032 521px,#ff002b 561px)"></i>
<i style="top:154px;left:29px;width:559px;background:linear-gradient(90deg,#00d4ff 0px,#0298ff 125px,#9176ff 186px,#ff5cff 229px,#ff44d7 247px,#ff2fb4 268px,#ff198f 300px,#ff066f 342px,#ff0062 367px,#ff004a 427px,#ff0035 513px,#ff002d 559px)"></i>
<i style="top:156px;left:30px;width:556px;background:linear-gradient(90deg,#00cfff 0px,#0096ff 120px,#0294ff 124px,#7d76ff 178px,#ff58ff 230px,#ff3ed3 250px,#ff26a9 278px,#ff1083 316px,#ff0067 360px,#ff004f 416px,#ff0039 498px,#ff002e 556px)"></i>
<i style="top:158px;left:31px;width:553px;background:linear-gradient(90deg,#00cbff 0px,#0190ff 123px,#8670ff 182px,#ff54ff 231px,#ff3cd6 250px,#ff29b3 272px,#ff1590 303px,#ff0370 346px,#ff0065 367px,#ff004c 429px,#ff0036 518px,#ff0030 553px)"></i>
<i style="top:160px;left:32px;width:550px;background:linear-gradient(90deg,#00c6ff 0px,#008eff 120px,#048cff 124px,#9669ff 189px,#ff50ff 232px,#ff39d6 251px,#ff22ac 279px,#ff0d86 317px,#ff006c 356px,#ff0051 418px,#ff003b 499px,#ff0031 550px)"></i>
<i style="top:162px;left:33px;width:547px;background:linear-gradient(90deg,#00c2ff 0px,#0289ff 122px,#7e6bff 179px,#ff4cff 233px,#ff35d5 253px,#ff22b1 277px,#ff1193 305px,#ff0378 339px,#ff006a 363px,#ff0051 422px,#ff003b 504px,#f03 547px)"></i>
<i style="top:164px;left:34px;width:544px;background:linear-gradient(90deg,#00beff 0px,#0186ff 121px,#8266ff 181px,#ff48ff 234px,#ff2ecd 259px,#ff1aa8 286px,#ff0a88 319px,#ff0073 350px,#ff0058 406px,#ff0040 486px,#ff0034 544px)"></i>
<i style="top:166px;left:34px;width:542px;background:linear-gradient(90deg,#00baff 0px,#0282ff 122px,#8f60ff 188px,#ff45ff 236px,#ff2ccf 260px,#ff18a9 288px,#ff0889 321px,#ff0076 349px,#ff005b 403px,#ff0043 479px,#ff0036 542px)"></i>
<i style="top:168px;left:35px;width:539px;background:linear-gradient(90deg,#00b6ff 0px,#027fff 121px,#8160ff 182px,#ff41ff 237px,#ff2bd3 259px,#ff18ac 287px,#ff078a 322px,#ff0079 347px,#ff005a 409px,#ff0042 488px,#ff0037 539px)"></i>
<i style="top:170px;left:36px;width:536px;background:linear-gradient(90deg,#00b2ff 0px,#017cff 120px,#875bff 185px,#ff3eff 238px,#ff28d2 261px,#ff16ad 288px,#ff058b 323px,#ff007b 346px,#ff005f 400px,#ff0047 473px,#ff0039 536px)"></i>
<i style="top:172px;left:37px;width:533px;background:linear-gradient(90deg,#00aeff 0px,#0279ff 120px,#8d56ff 188px,#ff3aff 239px,#ff26d4 261px,#ff14ae 289px,#ff048c 324px,#ff007e 344px,#ff0063 394px,#ff004a 466px,#ff003a 533px)"></i>
<i style="top:174px;left:38px;width:530px;background:linear-gradient(90deg,#00abff 0px,#0276ff 119px,#9950ff 194px,#ff37ff 240px,#ff25d8 260px,#ff13b2 287px,#ff028c 326px,#ff006b 379px,#ff0050 449px,#ff003c 530px)"></i>
<i style="top:176px;left:39px;width:527px;background:linear-gradient(90deg,#00a7ff 0px,#0173ff 118px,#944fff 192px,#ff34ff 241px,#ff21d5 263px,#ff0fad 293px,#ff008a 331px,#ff006a 384px,#ff004f 456px,#ff003e 527px)"></i>
<i style="top:178px;left:40px;width:524px;background:linear-gradient(90deg,#00a4ff 0px,#0270ff 118px,#874fff 186px,#ff31ff 242px,#ff1ed4 265px,#ff0eaf 293px,#ff008e 328px,#ff006f 377px,#ff0053 447px,#ff003f 524px)"></i>
<i style="top:180px;left:41px;width:521px;background:linear-gradient(90deg,#00a0ff 0px,#026eff 117px,#7f4eff 182px,#fc2fff 242px,#ff2cfb 245px,#ff1bd3 267px,#ff0baf 295px,#ff0090 328px,#ff0072 374px,#ff0057 439px,#ff0041 521px)"></i>
<i style="top:182px;left:41px;width:519px;background:linear-gradient(90deg,#009dff 0px,#016bff 117px,#9446ff 194px,#ff2bff 245px,#ff1ad5 268px,#ff09ad 299px,#ff0094 326px,#ff0074 374px,#ff0058 440px,#ff0042 519px)"></i>
<i style="top:184px;left:42px;width:517px;background:linear-gradient(90deg,#009aff 0px,#0268ff 117px,#8c46ff 190px,#ff29ff 246px,#ff18d7 268px,#ff08b0 298px,#ff0098 323px,#ff0079 368px,#ff005e 427px,#ff0045 512px,#f04 517px)"></i>
<i style="top:186px;left:43px;width:514px;background:linear-gradient(90deg,#0097ff 0px,#0266ff 116px,#7c47ff 182px,#ff25fd 248px,#ff14d3 272px,#ff05af 301px,#ff009b 322px,#ff007e 362px,#ff0062 420px,#ff004a 496px,#ff0046 514px)"></i>
<i style="top:188px;left:44px;width:511px;background:linear-gradient(90deg,#0094ff 0px,#0164ff 115px,#8742ff 188px,#ff22fd 249px,#ff13d5 272px,#ff05b2 300px,#ff00a0 318px,#ff0081 359px,#ff0064 418px,#ff004b 496px,#ff0047 511px)"></i>
<i style="top:190px;left:45px;width:508px;background:linear-gradient(90deg,#0091ff 0px,#0261ff 115px,#903dff 193px,#ff20fd 250px,#ff10d4 274px,#ff02ae 305px,#ff008b 346px,#ff006d 400px,#ff0054 468px,#ff0049 508px)"></i>
<i style="top:192px;left:46px;width:505px;background:linear-gradient(90deg,#008eff 0px,#025fff 114px,#7b40ff 182px,#fa1fff 248px,#ff1dfd 251px,#ff0ed3 276px,#ff00af 306px,#ff008e 344px,#ff006e 400px,#ff0053 475px,#ff004b 505px)"></i>
<i style="top:194px;left:47px;width:502px;background:linear-gradient(90deg,#008bff 0px,#015dff 113px,#823cff 186px,#ff1bfd 252px,#ff0cd5 276px,#ff00b1 306px,#ff0091 342px,#ff0072 395px,#ff0058 462px,#ff004d 502px)"></i>
<i style="top:196px;left:48px;width:499px;background:linear-gradient(90deg,#08f 0px,#025aff 113px,#8938ff 190px,#ff19fe 253px,#ff0bd8 275px,#ff00b4 304px,#ff0092 343px,#ff0073 395px,#ff0057 469px,#ff004e 499px)"></i>
<i style="top:198px;left:49px;width:496px;background:linear-gradient(90deg,#0085ff 0px,#0258ff 112px,#7a39ff 182px,#f918ff 250px,#ff16fc 255px,#ff08d6 278px,#ff00b8 302px,#ff0094 342px,#ff0075 394px,#ff0059 465px,#ff0050 496px)"></i>
<i style="top:200px;left:50px;width:493px;background:linear-gradient(90deg,#0082ff 0px,#0156ff 111px,#8634ff 189px,#ff14fe 255px,#ff08d9 277px,#ff00be 298px,#ff0098 339px,#f07 392px,#ff005b 463px,#ff0052 493px)"></i>
<i style="top:202px;left:51px;width:490px;background:linear-gradient(90deg,#0080ff 0px,#0254ff 111px,#8432ff 188px,#ff12fe 256px,#ff05d8 279px,#ff00c1 297px,#ff009f 332px,#ff007f 380px,#ff0063 443px,#ff0054 490px)"></i>
<i style="top:204px;left:52px;width:487px;background:linear-gradient(90deg,#007dff 0px,#0252ff 110px,#7434ff 179px,#fb11ff 254px,#ff0efa 259px,#ff02d3 284px,#ff00ad 318px,#ff008b 362px,#ff0069 430px,#ff0056 487px)"></i>
<i style="top:206px;left:53px;width:484px;background:linear-gradient(90deg,#007bff 0px,#0150ff 109px,#882dff 191px,#ff0dfe 258px,#ff02d9 281px,#ff00b6 311px,#ff0095 349px,#ff0075 405px,#ff0059 479px,#ff0058 484px)"></i>
<i style="top:208px;left:54px;width:481px;background:linear-gradient(90deg,#0078ff 0px,#024eff 109px,#8b2aff 193px,#ff0bfe 259px,#ff00d8 283px,#ff00b0 318px,#ff008f 360px,#ff006f 421px,#ff005a 481px)"></i>
<i style="top:210px;left:55px;width:478px;background:linear-gradient(90deg,#0076ff 0px,#024cff 108px,#7a2dff 183px,#fb0bff 257px,#ff08fa 262px,#ff00d8 284px,#ff00b2 318px,#ff0091 359px,#ff0072 417px,#ff005c 478px)"></i>
<i style="top:212px;left:56px;width:475px;background:linear-gradient(90deg,#0073ff 0px,#014aff 107px,#8229ff 188px,#ff07fe 261px,#f0d 282px,#ff00b6 315px,#ff0093 358px,#ff0074 415px,#ff005e 475px)"></i>
<i style="top:214px;left:57px;width:472px;background:linear-gradient(90deg,#0071ff 0px,#0248ff 107px,#8027ff 187px,#ff05fe 262px,#ff00e1 280px,#ff00b9 314px,#ff0098 353px,#ff0079 407px,#ff0060 472px)"></i>
<i style="top:216px;left:58px;width:469px;background:linear-gradient(90deg,#006eff 0px,#0247ff 106px,#7628ff 181px,#f407ff 256px,#ff03fe 263px,#f0d 284px,#ff00b9 316px,#ff009a 352px,#ff0079 409px,#ff0062 469px)"></i>
<i style="top:218px;left:59px;width:466px;background:linear-gradient(90deg,#006cff 0px,#0145ff 105px,#8422ff 190px,#ff02fe 264px,#ff00d6 291px,#ff00b2 324px,#ff008f 371px,#ff0070 433px,#ff0064 466px)"></i>
<i style="top:220px;left:60px;width:464px;background:linear-gradient(90deg,#006aff 0px,#0243ff 105px,#7f22ff 187px,#ff00fe 265px,#ff00d9 290px,#ff00b2 326px,#ff0090 371px,#ff006f 438px,#ff0065 464px)"></i>
<i style="top:222px;left:61px;width:461px;background:linear-gradient(90deg,#0068ff 0px,#0242ff 104px,#851fff 191px,#fe00ff 265px,#ff00d4 295px,#ff00a9 338px,#ff0087 389px,#ff006a 454px,#ff0068 461px)"></i>
<i style="top:224px;left:62px;width:458px;background:linear-gradient(90deg,#06f 0px,#0240ff 104px,#8e1bff 197px,#f800ff 262px,#ff00fc 268px,#ff00d2 298px,#ff00a8 341px,#ff0086 393px,#ff006a 458px)"></i>
<i style="top:226px;left:63px;width:455px;background:linear-gradient(90deg,#0064ff 0px,#023eff 103px,#8c1aff 196px,#f100ff 259px,#ff00fe 268px,#ff00d6 296px,#ff00ab 339px,#ff0089 390px,#ff006c 455px)"></i>
<i style="top:228px;left:64px;width:452px;background:linear-gradient(90deg,#0061ff 0px,#023dff 102px,#761eff 182px,#ec00ff 257px,#ff00fe 269px,#ff00d8 296px,#f0a 342px,#f08 394px,#ff006e 452px)"></i>
<i style="top:230px;left:65px;width:449px;background:linear-gradient(90deg,#005fff 0px,#023bff 102px,#8b17ff 196px,#e600ff 254px,#ff00fe 270px,#ff00d7 298px,#ff00ad 340px,#ff008b 391px,#ff0070 449px)"></i>
<i style="top:232px;left:66px;width:446px;background:linear-gradient(90deg,#005dff 0px,#023aff 101px,#8018ff 189px,#e000ff 251px,#ff00fe 271px,#ff00d6 300px,#ff00ac 343px,#ff008a 395px,#ff0073 446px)"></i>
<i style="top:234px;left:67px;width:443px;background:linear-gradient(90deg,#005bff 0px,#0238ff 100px,#741aff 181px,#da00ff 248px,#ff00fe 272px,#ff00d5 302px,#ff00af 341px,#ff008b 395px,#ff0075 443px)"></i>
<i style="top:236px;left:69px;width:439px;background:linear-gradient(90deg,#0059ff 0px,#0237ff 99px,#8e11ff 198px,#d400ff 244px,#ff00fe 272px,#ff00d2 305px,#f0a 348px,#f08 402px,#f07 439px)"></i>
<i style="top:238px;left:70px;width:436px;background:linear-gradient(90deg,#0057ff 0px,#0236ff 98px,#8213ff 190px,#ce00ff 241px,#ff00fe 273px,#ff00d6 303px,#ff00b0 342px,#ff008e 393px,#ff0079 436px)"></i>
<i style="top:240px;left:71px;width:433px;background:linear-gradient(90deg,#05f 0px,#0234ff 97px,#7216ff 179px,#c900ff 238px,#ff00fe 274px,#ff00d4 306px,#ff00af 345px,#ff008d 397px,#ff007c 433px)"></i>
<i style="top:242px;left:72px;width:430px;background:linear-gradient(90deg,#0054ff 0px,#0233ff 97px,#8a0eff 196px,#c300ff 235px,#ff00fe 275px,#ff00d7 305px,#ff00b2 343px,#ff0090 394px,#ff007e 430px)"></i>
<i style="top:244px;left:73px;width:427px;background:linear-gradient(90deg,#0052ff 0px,#0231ff 96px,#810fff 190px,#be00ff 232px,#ff00fe 276px,#ff00d6 307px,#ff00b0 347px,#ff008c 403px,#ff0081 427px)"></i>
<i style="top:246px;left:74px;width:424px;background:linear-gradient(90deg,#0050ff 0px,#0230ff 95px,#7e0eff 188px,#ba00ff 230px,#ff00fe 277px,#ff00d5 309px,#ff00af 350px,#ff008d 404px,#ff0083 424px)"></i>
<i style="top:248px;left:75px;width:421px;background:linear-gradient(90deg,#004eff 0px,#022fff 95px,#8d09ff 199px,#b500ff 227px,#ff00fe 278px,#ff00d8 308px,#ff00b6 343px,#ff0093 395px,#ff0086 421px)"></i>
<i style="top:250px;left:76px;width:418px;background:linear-gradient(90deg,#004dff 0px,#022eff 94px,#8709ff 195px,#b000ff 224px,#ff00fe 279px,#ff00d6 311px,#ff00b0 352px,#ff008d 408px,#f08 418px)"></i>
<i style="top:252px;left:78px;width:414px;background:linear-gradient(90deg,#004bff 0px,#022cff 92px,#790cff 184px,#ab00ff 220px,#ff00fe 279px,#ff00d4 313px,#ff00af 354px,#ff008c 411px,#ff008b 414px)"></i>
<i style="top:254px;left:79px;width:411px;background:linear-gradient(90deg,#0049ff 0px,#022bff 92px,#8507ff 193px,#a700ff 218px,#ff00fe 280px,#ff00d2 316px,#ff00af 356px,#ff008d 411px)"></i>
<i style="top:256px;left:80px;width:409px;background:linear-gradient(90deg,#0047ff 0px,#022aff 91px,#8207ff 191px,#a100ff 214px,#ff00fe 281px,#ff00d7 313px,#ff00b4 351px,#ff0092 404px,#ff0090 409px)"></i>
<i style="top:258px;left:81px;width:406px;background:linear-gradient(90deg,#0046ff 0px,#0229ff 90px,#7709ff 183px,#9e00ff 212px,#ff00fe 282px,#ff00d4 317px,#ff00b3 354px,#ff0092 406px)"></i>
<i style="top:260px;left:82px;width:403px;background:linear-gradient(90deg,#04f 0px,#0228ff 90px,#8803ff 196px,#a400ff 217px,#ff00fe 283px,#ff00d3 319px,#ff00af 361px,#ff0095 403px)"></i>
<i style="top:262px;left:83px;width:400px;background:linear-gradient(90deg,#0043ff 0px,#0226ff 89px,#8502ff 194px,#ff00fe 284px,#ff00d6 318px,#ff00b3 357px,#ff0098 400px)"></i>
<i style="top:264px;left:85px;width:396px;background:linear-gradient(90deg,#0041ff 0px,#0225ff 87px,#7904ff 184px,#90f 208px,#ff00fd 285px,#ff00d5 319px,#ff00b2 359px,#ff009b 396px)"></i>
<i style="top:266px;left:86px;width:393px;background:linear-gradient(90deg,#003fff 0px,#0224ff 87px,#8700ff 195px,#ff00fd 286px,#ff00d3 322px,#ff00ad 368px,#ff009d 393px)"></i>
<i style="top:268px;left:87px;width:390px;background:linear-gradient(90deg,#003eff 0px,#0223ff 86px,#7f01ff 189px,#ff00fd 287px,#ff00d9 318px,#ff00b6 357px,#ff00a0 390px)"></i>
<i style="top:270px;left:88px;width:387px;background:linear-gradient(90deg,#003dff 0px,#0122ff 85px,#8400ff 193px,#ff00fd 288px,#ff00d5 323px,#ff00b0 367px,#ff00a3 387px)"></i>
<i style="top:272px;left:89px;width:384px;background:linear-gradient(90deg,#003bff 0px,#0221ff 85px,#8000ff 190px,#ff00fd 289px,#ff00d3 326px,#ff00ad 373px,#ff00a6 384px)"></i>
<i style="top:274px;left:90px;width:381px;background:linear-gradient(90deg,#003aff 0px,#0220ff 84px,#7c00ff 187px,#ff00fd 290px,#ff00d4 326px,#ff00af 372px,#ff00a9 381px)"></i>
<i style="top:276px;left:92px;width:377px;background:linear-gradient(90deg,#0038ff 0px,#011fff 82px,#7800ff 183px,#fa00ff 285px,#ff00fc 291px,#ff00d8 323px,#ff00b5 364px,#ff00ac 377px)"></i>
<i style="top:278px;left:93px;width:374px;background:linear-gradient(90deg,#0037ff 0px,#021eff 82px,#7400ff 180px,#f0f 290px,#ff00da 322px,#ff00b6 364px,#ff00af 374px)"></i>
<i style="top:280px;left:94px;width:371px;background:linear-gradient(90deg,#0035ff 0px,#021dff 81px,#7100ff 177px,#e900ff 274px,#ff00fd 292px,#ff00d3 330px,#ff00b3 371px)"></i>
<i style="top:282px;left:95px;width:368px;background:linear-gradient(90deg,#0034ff 0px,#011cff 80px,#6d00ff 174px,#ed00ff 278px,#ff00fd 293px,#ff00d5 330px,#ff00b6 368px)"></i>
<i style="top:284px;left:96px;width:365px;background:linear-gradient(90deg,#03f 0px,#021bff 80px,#6900ff 171px,#f100ff 282px,#ff00fd 294px,#ff00d0 336px,#ff00b9 365px)"></i>
<i style="top:286px;left:98px;width:361px;background:linear-gradient(90deg,#0031ff 0px,#021aff 78px,#60f 167px,#e300ff 271px,#ff00fd 294px,#ff00d3 333px,#ff00bc 361px)"></i>
<i style="top:288px;left:99px;width:358px;background:linear-gradient(90deg,#0030ff 0px,#0119ff 77px,#6300ff 165px,#f100ff 283px,#ff00fd 295px,#ff00d6 331px,#ff00c0 358px)"></i>
<i style="top:290px;left:100px;width:355px;background:linear-gradient(90deg,#002fff 0px,#0218ff 77px,#6000ff 162px,#e100ff 271px,#ff00fd 296px,#ff00d3 336px,#ff00c3 355px)"></i>
<i style="top:292px;left:101px;width:353px;background:linear-gradient(90deg,#002eff 0px,#0218ff 76px,#5b00ff 158px,#e500ff 275px,#ff00fd 297px,#ff00c8 350px,#ff00c6 353px)"></i>
<i style="top:294px;left:103px;width:349px;background:linear-gradient(90deg,#002cff 0px,#0117ff 74px,#5900ff 155px,#df00ff 270px,#ff00fd 297px,#ff00ca 348px,#ff00ca 349px)"></i>
<i style="top:296px;left:104px;width:346px;background:linear-gradient(90deg,#002bff 0px,#0216ff 74px,#5600ff 152px,#d800ff 265px,#ff00fd 298px,#ff00cd 346px)"></i>
<i style="top:298px;left:105px;width:343px;background:linear-gradient(90deg,#002aff 0px,#0215ff 73px,#5300ff 149px,#d700ff 265px,#ff00fd 299px,#ff00d1 343px)"></i>
<i style="top:300px;left:106px;width:340px;background:linear-gradient(90deg,#0029ff 0px,#0114ff 72px,#5000ff 146px,#c800ff 253px,#ff00fd 300px,#ff00d5 340px)"></i>
<i style="top:302px;left:108px;width:336px;background:linear-gradient(90deg,#0027ff 0px,#0213ff 71px,#4d00ff 142px,#c600ff 251px,#ff00fd 300px,#ff00d8 336px)"></i>
<i style="top:304px;left:109px;width:333px;background:linear-gradient(90deg,#0026ff 0px,#0213ff 70px,#4a00ff 139px,#bc00ff 243px,#ff00fe 301px,#ff00dc 333px)"></i>
<i style="top:306px;left:110px;width:330px;background:linear-gradient(90deg,#0025ff 0px,#0212ff 70px,#4700ff 136px,#b800ff 240px,#ff00fe 302px,#ff00e0 330px)"></i>
<i style="top:308px;left:111px;width:327px;background:linear-gradient(90deg,#0024ff 0px,#0211ff 69px,#40f 133px,#bd00ff 245px,#ff00fe 303px,#ff00e4 327px)"></i>
<i style="top:310px;left:113px;width:323px;background:linear-gradient(90deg,#0023ff 0px,#0210ff 67px,#4100ff 129px,#ba00ff 242px,#ff00fe 303px,#ff00e8 323px)"></i>
<i style="top:312px;left:114px;width:320px;background:linear-gradient(90deg,#0021ff 0px,#020fff 67px,#3f00ff 127px,#bf00ff 247px,#ff00fe 304px,#ff00ec 320px)"></i>
<i style="top:314px;left:115px;width:317px;background:linear-gradient(90deg,#0020ff 0px,#020fff 66px,#3b00ff 123px,#bc00ff 245px,#ff00fe 305px,#ff00f1 317px)"></i>
<i style="top:316px;left:117px;width:313px;background:linear-gradient(90deg,#001fff 0px,#020eff 64px,#3900ff 120px,#c200ff 250px,#ff00fe 305px,#ff00f5 313px)"></i>
<i style="top:318px;left:118px;width:310px;background:linear-gradient(90deg,#001eff 0px,#020dff 64px,#3700ff 117px,#b200ff 236px,#ff00fe 306px,#ff00f9 310px)"></i>
<i style="top:320px;left:119px;width:307px;background:linear-gradient(90deg,#001dff 0px,#020cff 63px,#3400ff 114px,#ab00ff 230px,#ff00fe 307px)"></i>
<i style="top:322px;left:120px;width:304px;background:linear-gradient(90deg,#001cff 0px,#020cff 62px,#3100ff 111px,#b300ff 238px,#fc00ff 304px)"></i>
<i style="top:324px;left:122px;width:300px;background:linear-gradient(90deg,#001bff 0px,#020bff 61px,#2f00ff 107px,#ab00ff 230px,#f700ff 300px)"></i>
<i style="top:326px;left:123px;width:298px;background:linear-gradient(90deg,#001aff 0px,#020aff 60px,#2d00ff 105px,#b400ff 239px,#f400ff 298px)"></i>
<i style="top:328px;left:124px;width:295px;background:linear-gradient(90deg,#0019ff 0px,#020aff 59px,#2900ff 101px,#bf00ff 250px,#f000ff 295px)"></i>
<i style="top:330px;left:126px;width:291px;background:linear-gradient(90deg,#0018ff 0px,#0209ff 58px,#2700ff 97px,#b700ff 242px,#ec00ff 291px)"></i>
<i style="top:332px;left:127px;width:288px;background:linear-gradient(90deg,#0017ff 0px,#0208ff 57px,#2700ff 97px,#c800ff 258px,#e700ff 288px)"></i>
<i style="top:334px;left:129px;width:284px;background:linear-gradient(90deg,#0016ff 0px,#0208ff 55px,#2400ff 92px,#b0f 246px,#e300ff 284px)"></i>
<i style="top:336px;left:130px;width:281px;background:linear-gradient(90deg,#0015ff 0px,#0207ff 55px,#2300ff 90px,#a700ff 227px,#df00ff 281px)"></i>
<i style="top:338px;left:131px;width:278px;background:linear-gradient(90deg,#0014ff 0px,#0206ff 54px,#2100ff 88px,#af00ff 235px,#db00ff 278px)"></i>
<i style="top:340px;left:133px;width:274px;background:linear-gradient(90deg,#0013ff 0px,#0206ff 52px,#1e00ff 83px,#9a00ff 213px,#d700ff 274px)"></i>
<i style="top:342px;left:134px;width:271px;background:linear-gradient(90deg,#0012ff 0px,#0205ff 52px,#1d00ff 82px,#ae00ff 234px,#d300ff 271px)"></i>
<i style="top:344px;left:136px;width:267px;background:linear-gradient(90deg,#01f 0px,#0204ff 50px,#1f00ff 82px,#9b00ff 214px,#d000ff 267px)"></i>
<i style="top:346px;left:137px;width:264px;background:linear-gradient(90deg,#0010ff 0px,#0204ff 49px,#1b00ff 77px,#9200ff 205px,#c0f 264px)"></i>
<i style="top:348px;left:138px;width:261px;background:linear-gradient(90deg,#000fff 0px,#0203ff 49px,#1f00ff 82px,#a900ff 229px,#c800ff 261px)"></i>
<i style="top:350px;left:140px;width:257px;background:linear-gradient(90deg,#000eff 0px,#0203ff 47px,#1a00ff 74px,#9700ff 210px,#c500ff 257px)"></i>
<i style="top:352px;left:141px;width:254px;background:linear-gradient(90deg,#000dff 0px,#0202ff 46px,#8000ff 186px,#c100ff 254px)"></i>
<i style="top:354px;left:143px;width:250px;background:linear-gradient(90deg,#000cff 0px,#0201ff 45px,#8c00ff 198px,#be00ff 250px)"></i>
<i style="top:356px;left:144px;width:247px;background:linear-gradient(90deg,#000cff 0px,#0201ff 44px,#8700ff 193px,#ba00ff 247px)"></i>
<i style="top:358px;left:146px;width:243px;background:linear-gradient(90deg,#000aff 0px,#0200ff 42px,#7a00ff 178px,#b700ff 243px)"></i>
<i style="top:360px;left:147px;width:240px;background:linear-gradient(90deg,#000aff 0px,#0200ff 42px,#8e00ff 200px,#b300ff 240px)"></i>
<i style="top:362px;left:149px;width:237px;background:linear-gradient(90deg,#0009ff 0px,#0200ff 40px,#8100ff 185px,#b100ff 237px)"></i>
<i style="top:364px;left:150px;width:234px;background:linear-gradient(90deg,#0008ff 0px,#0200ff 39px,#7e00ff 182px,#ae00ff 234px)"></i>
<i style="top:366px;left:152px;width:230px;background:linear-gradient(90deg,#0007ff 0px,#0200ff 38px,#8700ff 191px,#a0f 230px)"></i>
<i style="top:368px;left:153px;width:227px;background:linear-gradient(90deg,#0006ff 0px,#0200ff 37px,#8300ff 187px,#a700ff 227px)"></i>
<i style="top:370px;left:155px;width:223px;background:linear-gradient(90deg,#0005ff 0px,#0200ff 35px,#7a00ff 176px,#a400ff 223px)"></i>
<i style="top:372px;left:156px;width:220px;background:linear-gradient(90deg,#0005ff 0px,#00f 30px,#1200ff 54px,#9000ff 201px,#a100ff 220px)"></i>
<i style="top:374px;left:158px;width:216px;background:linear-gradient(90deg,#0004ff 0px,#00f 28px,#0a00ff 43px,#8e00ff 198px,#9e00ff 216px)"></i>
<i style="top:376px;left:160px;width:212px;background:linear-gradient(90deg,#0003ff 0px,#0100ff 30px,#7e00ff 179px,#9b00ff 212px)"></i>
<i style="top:378px;left:161px;width:209px;background:linear-gradient(90deg,#0002ff 0px,#0200ff 31px,#8900ff 192px,#9800ff 209px)"></i>
<i style="top:380px;left:163px;width:205px;background:linear-gradient(90deg,#0001ff 0px,#0200ff 29px,#8100ff 182px,#9500ff 205px)"></i>
<i style="top:382px;left:165px;width:201px;background:linear-gradient(90deg,#00f 0px,#0200ff 28px,#9200ff 201px)"></i>
<i style="top:384px;left:166px;width:198px;background:linear-gradient(90deg,#00f 0px,#0200ff 27px,#8500ff 186px,#8f00ff 198px)"></i>
<i style="top:386px;left:168px;width:194px;background:linear-gradient(90deg,#00f 0px,#0200ff 25px,#8300ff 183px,#8c00ff 194px)"></i>
<i style="top:388px;left:170px;width:190px;background:linear-gradient(90deg,#00f 0px,#0200ff 24px,#8900ff 190px)"></i>
<i style="top:390px;left:171px;width:187px;background:linear-gradient(90deg,#00f 0px,#0200ff 23px,#8700ff 187px)"></i>
<i style="top:392px;left:173px;width:183px;background:linear-gradient(90deg,#00f 0px,#0200ff 21px,#8400ff 183px)"></i>
<i style="top:394px;left:175px;width:179px;background:linear-gradient(90deg,#00f 0px,#0200ff 20px,#8100ff 179px)"></i>
<i style="top:396px;left:176px;width:176px;background:linear-gradient(90deg,#00f 0px,#0200ff 19px,#7f00ff 176px)"></i>
<i style="top:398px;left:178px;width:173px;background:linear-gradient(90deg,#00f 0px,#0200ff 17px,#7d00ff 173px)"></i>
<i style="top:400px;left:180px;width:169px;background:linear-gradient(90deg,#00f 0px,#0200ff 16px,#7a00ff 169px)"></i>
<i style="top:402px;left:182px;width:165px;background:linear-gradient(90deg,#00f 0px,#0200ff 14px,#7800ff 165px)"></i>
<i style="top:404px;left:184px;width:161px;background:linear-gradient(90deg,#00f 0px,#0200ff 12px,#7500ff 161px)"></i>
<i style="top:406px;left:186px;width:157px;background:linear-gradient(90deg,#00f 0px,#0300ff 12px,#7300ff 157px)"></i>
<i style="top:408px;left:188px;width:153px;background:linear-gradient(90deg,#00f 0px,#0300ff 10px,#7000ff 153px)"></i>
<i style="top:410px;left:190px;width:149px;background:linear-gradient(90deg,#00f 0px,#0400ff 10px,#6e00ff 149px)"></i>
<i style="top:412px;left:192px;width:145px;background:linear-gradient(90deg,#00f 0px,#1200ff 27px,#6b00ff 145px)"></i>
<i style="top:414px;left:194px;width:141px;background:linear-gradient(90deg,#00f 0px,#6900ff 141px)"></i>
<i style="top:416px;left:196px;width:137px;background:linear-gradient(90deg,#00f 0px,#6700ff 137px)"></i>
<i style="top:418px;left:198px;width:133px;background:linear-gradient(90deg,#0200ff 0px,#6400ff 133px)"></i>
<i style="top:420px;left:200px;width:129px;background:linear-gradient(90deg,#0300ff 0px,#6200ff 129px)"></i>
<i style="top:422px;left:202px;width:125px;background:linear-gradient(90deg,#0400ff 0px,#6000ff 125px)"></i>
<i style="top:424px;left:204px;width:121px;background:linear-gradient(90deg,#0500ff 0px,#5d00ff 121px)"></i>
<i style="top:426px;left:206px;width:117px;background:linear-gradient(90deg,#0600ff 0px,#5b00ff 117px)"></i>
<i style="top:428px;left:209px;width:112px;background:linear-gradient(90deg,#0800ff 0px,#5900ff 112px)"></i>
<i style="top:430px;left:211px;width:108px;background:linear-gradient(90deg,#0900ff 0px,#5700ff 108px)"></i>
<i style="top:432px;left:213px;width:104px;background:linear-gradient(90deg,#0a00ff 0px,#50f 104px)"></i>
<i style="top:434px;left:215px;width:101px;background:linear-gradient(90deg,#0c00ff 0px,#5300ff 101px)"></i>
<i style="top:436px;left:218px;width:96px;background:linear-gradient(90deg,#0d00ff 0px,#5100ff 96px)"></i>
<i style="top:438px;left:220px;width:92px;background:linear-gradient(90deg,#0e00ff 0px,#4f00ff 92px)"></i>
<i style="top:440px;left:222px;width:88px;background:linear-gradient(90deg,#1000ff 0px,#4d00ff 88px)"></i>
<i style="top:442px;left:225px;width:83px;background:linear-gradient(90deg,#10f 0px,#4b00ff 83px)"></i>
<i style="top:444px;left:227px;width:79px;background:linear-gradient(90deg,#1200ff 0px,#4900ff 79px)"></i>
<i style="top:446px;left:230px;width:74px;background:linear-gradient(90deg,#1400ff 0px,#4700ff 74px)"></i>
<i style="top:448px;left:232px;width:70px;background:linear-gradient(90deg,#1500ff 0px,#4500ff 70px)"></i>
<i style="top:450px;left:235px;width:65px;background:linear-gradient(90deg,#1700ff 0px,#4300ff 65px)"></i>
<i style="top:452px;left:237px;width:61px;background:linear-gradient(90deg,#1800ff 0px,#4100ff 61px)"></i>
<i style="top:454px;left:240px;width:56px;background:linear-gradient(90deg,#1900ff 0px,#3f00ff 56px)"></i>
<i style="top:456px;left:242px;width:52px;background:linear-gradient(90deg,#1a00ff 0px,#3d00ff 52px)"></i>
<i style="top:458px;left:244px;width:48px;background:linear-gradient(90deg,#1b00ff 0px,#3c00ff 48px)"></i>
<i style="top:460px;left:247px;width:43px;background:linear-gradient(90deg,#1d00ff 0px,#3a00ff 43px)"></i>
<i style="top:462px;left:249px;width:39px;background:linear-gradient(90deg,#1e00ff 0px,#3800ff 39px)"></i>
<i style="top:464px;left:251px;width:35px;background:linear-gradient(90deg,#1f00ff 0px,#3600ff 35px)"></i>
<i style="top:466px;left:254px;width:30px;background:linear-gradient(90deg,#2100ff 0px,#3400ff 30px)"></i>
<i style="top:468px;left:256px;width:26px;background:linear-gradient(90deg,#20f 0px,#3200ff 26px)"></i>
<i style="top:470px;left:259px;width:22px;background:linear-gradient(90deg,#2300ff 0px,#3100ff 22px)"></i>
<i style="top:472px;left:261px;width:18px;background:linear-gradient(90deg,#2400ff 0px,#3000ff 18px)"></i>
<i style="top:474px;left:264px;width:13px;background:linear-gradient(90deg,#2600ff 0px,#2e00ff 13px)"></i>
<i style="top:476px;left:267px;width:8px;background:linear-gradient(90deg,#2700ff 0px,#2c00ff 8px)"></i>
<svg width="639" height="492" style="position:absolute;left:0;top:0"><path fill="#000" fill-opacity="0.38" fill-rule="evenodd" d="M-5,-5H644V497H-5Z M479.6,62.7 L132.7,30.2 L186.4,362.0 Z"/></svg>
</div></div>
<div style="left:1455px;top:441px;width:197px;height:130px;overflow:hidden"><div class="cg">
<i style="top:0px;left:0px;width:197px;background:linear-gradient(90deg,#b1ff00 0px,#feff00 148px,#ffe700 197px)"></i>
<i style="top:2px;left:0px;width:197px;background:linear-gradient(90deg,#b1ff00 0px,#fffd00 151px,#ffe600 197px)"></i>
<i style="top:4px;left:0px;width:197px;background:linear-gradient(90deg,#b2ff00 0px,#fffe00 149px,#ffe500 197px)"></i>
<i style="top:6px;left:0px;width:197px;background:linear-gradient(90deg,#b3ff00 0px,#fffe00 147px,#ffe500 197px)"></i>
<i style="top:8px;left:0px;width:197px;background:linear-gradient(90deg,#b4ff00 0px,#fffd00 146px,#ffe400 197px)"></i>
<i style="top:10px;left:0px;width:197px;background:linear-gradient(90deg,#b4ff00 0px,#fffe00 144px,#ffe300 197px)"></i>
<i style="top:12px;left:0px;width:197px;background:linear-gradient(90deg,#b5ff00 0px,#fffe00 142px,#ffe200 197px)"></i>
<i style="top:14px;left:0px;width:197px;background:linear-gradient(90deg,#b6ff01 0px,#fffd00 141px,#ffe100 197px)"></i>
<i style="top:16px;left:0px;width:197px;background:linear-gradient(90deg,#b7ff01 0px,#fffe00 139px,#ffe100 197px)"></i>
<i style="top:18px;left:0px;width:197px;background:linear-gradient(90deg,#b8ff02 0px,#fffe00 137px,#ffe000 197px)"></i>
<i style="top:20px;left:0px;width:197px;background:linear-gradient(90deg,#b8ff02 0px,#fffd00 136px,#ffdf00 197px)"></i>
<i style="top:22px;left:0px;width:197px;background:linear-gradient(90deg,#b9ff03 0px,#d2ff00 48px,#fffe00 134px,#ffde00 197px)"></i>
<i style="top:24px;left:0px;width:197px;background:linear-gradient(90deg,#baff03 0px,#d9ff00 60px,#fffe00 132px,#fd0 197px)"></i>
<i style="top:26px;left:0px;width:197px;background:linear-gradient(90deg,#bbff04 0px,#d4ff00 48px,#fffd00 131px,#fd0 197px)"></i>
<i style="top:28px;left:0px;width:197px;background:linear-gradient(90deg,#bcff04 0px,#d9ff00 56px,#fffe00 129px,#ffdc00 197px)"></i>
<i style="top:30px;left:0px;width:197px;background:linear-gradient(90deg,#bcff05 0px,#d8ff00 53px,#fffe00 127px,#ffdb00 197px)"></i>
<i style="top:32px;left:0px;width:197px;background:linear-gradient(90deg,#bdff05 0px,#df0 60px,#fffd00 126px,#ffda00 197px)"></i>
<i style="top:34px;left:0px;width:197px;background:linear-gradient(90deg,#beff06 0px,#df0 60px,#fffe00 124px,#ffda00 197px)"></i>
<i style="top:36px;left:0px;width:197px;background:linear-gradient(90deg,#bfff06 0px,#e1ff00 66px,#fffe00 122px,#ffd900 197px)"></i>
<i style="top:38px;left:0px;width:197px;background:linear-gradient(90deg,#c0ff07 0px,#e3ff00 67px,#fffd00 121px,#ffd800 197px)"></i>
<i style="top:40px;left:0px;width:197px;background:linear-gradient(90deg,#c0ff07 0px,#e7ff00 72px,#fffd00 120px,#ffd700 197px)"></i>
<i style="top:42px;left:0px;width:197px;background:linear-gradient(90deg,#c1ff08 0px,#e8ff00 73px,#fffe00 117px,#ffd700 196px,#ffd700 197px)"></i>
<i style="top:44px;left:0px;width:197px;background:linear-gradient(90deg,#c2ff08 0px,#ecff00 78px,#fffd00 117px,#ffd800 192px,#ffd600 197px)"></i>
<i style="top:46px;left:0px;width:197px;background:linear-gradient(90deg,#c3ff09 0px,#ef0 81px,#fffd00 115px,#ffd500 197px)"></i>
<i style="top:48px;left:0px;width:197px;background:linear-gradient(90deg,#c4ff09 0px,#f2ff00 86px,#fffd00 113px,#ffd400 197px)"></i>
<i style="top:50px;left:0px;width:197px;background:linear-gradient(90deg,#c5ff0a 0px,#f4ff00 88px,#fffd00 112px,#ffd700 189px,#ffd400 197px)"></i>
<i style="top:52px;left:0px;width:197px;background:linear-gradient(90deg,#c5ff0a 0px,#f8ff00 93px,#fffd00 110px,#ffd500 192px,#ffd300 197px)"></i>
<i style="top:54px;left:0px;width:197px;background:linear-gradient(90deg,#c6ff0b 0px,#faff00 96px,#fffd00 108px,#ffd300 195px,#ffd200 197px)"></i>
<i style="top:56px;left:0px;width:197px;background:linear-gradient(90deg,#c7ff0b 0px,#feff00 101px,#ffd100 197px)"></i>
<i style="top:58px;left:0px;width:197px;background:linear-gradient(90deg,#c8ff0c 0px,#fffd00 104px,#ffd200 194px,#ffd100 197px)"></i>
<i style="top:60px;left:0px;width:197px;background:linear-gradient(90deg,#c9ff0c 0px,#fffe00 102px,#ffd500 185px,#ffd000 197px)"></i>
<i style="top:62px;left:0px;width:197px;background:linear-gradient(90deg,#caff0d 0px,#fffe00 100px,#ffd600 181px,#ffcf00 197px)"></i>
<i style="top:64px;left:0px;width:197px;background:linear-gradient(90deg,#caff0d 0px,#fffd00 99px,#ffd400 184px,#ffcf00 197px)"></i>
<i style="top:66px;left:0px;width:197px;background:linear-gradient(90deg,#cbff0e 0px,#fffe01 97px,#ffd500 180px,#ffce00 197px)"></i>
<i style="top:68px;left:0px;width:197px;background:linear-gradient(90deg,#ccff0e 0px,#fffe02 95px,#ffd500 178px,#ffcd00 197px)"></i>
<i style="top:70px;left:0px;width:197px;background:linear-gradient(90deg,#cdff0f 0px,#fffd03 94px,#ffe400 142px,#ffcd00 197px)"></i>
<i style="top:72px;left:0px;width:197px;background:linear-gradient(90deg,#ceff0f 0px,#fffe03 92px,#ffdc00 158px,#fc0 197px)"></i>
<i style="top:74px;left:0px;width:197px;background:linear-gradient(90deg,#cfff10 0px,#fffe04 90px,#ffe100 146px,#ffcb00 197px)"></i>
<i style="top:76px;left:0px;width:197px;background:linear-gradient(90deg,#cfff10 0px,#fffd05 89px,#ffe200 142px,#ffca00 197px)"></i>
<i style="top:78px;left:0px;width:197px;background:linear-gradient(90deg,#d0ff11 0px,#fffe06 87px,#ffe000 144px,#ffca00 197px)"></i>
<i style="top:80px;left:0px;width:197px;background:linear-gradient(90deg,#d1ff12 0px,#fffe06 85px,#ffdc00 151px,#ffc900 197px)"></i>
<i style="top:82px;left:0px;width:197px;background:linear-gradient(90deg,#d2ff12 0px,#fffd07 84px,#ffdb00 152px,#ffc800 197px)"></i>
<i style="top:84px;left:0px;width:197px;background:linear-gradient(90deg,#d3ff13 0px,#fffd08 82px,#ffd900 155px,#ffc800 197px)"></i>
<i style="top:86px;left:0px;width:197px;background:linear-gradient(90deg,#d4ff13 0px,#fffe09 80px,#ffd700 158px,#ffc700 197px)"></i>
<i style="top:88px;left:0px;width:197px;background:linear-gradient(90deg,#d5ff14 0px,#fffd09 79px,#ffd400 162px,#ffc600 197px)"></i>
<i style="top:90px;left:0px;width:197px;background:linear-gradient(90deg,#d6ff14 0px,#fffd0a 77px,#ffd200 165px,#ffc600 197px)"></i>
<i style="top:92px;left:0px;width:197px;background:linear-gradient(90deg,#d6ff15 0px,#fffe0b 75px,#ffd500 157px,#ffc500 197px)"></i>
<i style="top:94px;left:0px;width:197px;background:linear-gradient(90deg,#d7ff15 0px,#fffd0c 74px,#ffd100 165px,#ffc400 197px)"></i>
<i style="top:96px;left:0px;width:197px;background:linear-gradient(90deg,#d8ff16 0px,#fffd0d 72px,#ffd100 163px,#ffc400 197px)"></i>
<i style="top:98px;left:0px;width:197px;background:linear-gradient(90deg,#d9ff16 0px,#fffe0d 70px,#ffd502 152px,#ffc300 197px)"></i>
<i style="top:100px;left:0px;width:197px;background:linear-gradient(90deg,#daff17 0px,#fffd0e 69px,#ffd302 155px,#ffc200 197px)"></i>
<i style="top:102px;left:0px;width:197px;background:linear-gradient(90deg,#dbff18 0px,#fffd0f 67px,#ffd102 158px,#ffc200 197px)"></i>
<i style="top:104px;left:0px;width:197px;background:linear-gradient(90deg,#dcff18 0px,#fffe10 65px,#ffd404 149px,#ffc100 197px)"></i>
<i style="top:106px;left:0px;width:197px;background:linear-gradient(90deg,#ddff19 0px,#fffd10 64px,#ffd505 145px,#ffc000 197px)"></i>
<i style="top:108px;left:0px;width:197px;background:linear-gradient(90deg,#deff19 0px,#fffd11 62px,#ffd305 148px,#ffc000 197px)"></i>
<i style="top:110px;left:0px;width:197px;background:linear-gradient(90deg,#deff1a 0px,#fffe12 60px,#ffd305 146px,#ffbf00 197px)"></i>
<i style="top:112px;left:0px;width:197px;background:linear-gradient(90deg,#dfff1a 0px,#fffe13 58px,#ffd406 142px,#ffbe00 197px)"></i>
<i style="top:114px;left:0px;width:197px;background:linear-gradient(90deg,#e0ff1b 0px,#fffd14 57px,#ffd206 145px,#ffbe00 197px)"></i>
<i style="top:116px;left:0px;width:197px;background:linear-gradient(90deg,#e1ff1c 0px,#fffe14 55px,#ffd207 143px,#ffbd01 197px)"></i>
<i style="top:118px;left:0px;width:197px;background:linear-gradient(90deg,#e2ff1c 0px,#fffe15 53px,#ffd308 139px,#ffbc01 197px)"></i>
<i style="top:120px;left:0px;width:197px;background:linear-gradient(90deg,#e3ff1d 0px,#fffd16 52px,#ffd409 135px,#ffbc01 197px)"></i>
<i style="top:122px;left:0px;width:197px;background:linear-gradient(90deg,#e4ff1d 0px,#fffe17 50px,#ffd209 138px,#ffbb02 197px)"></i>
<i style="top:124px;left:0px;width:197px;background:linear-gradient(90deg,#e5ff1e 0px,#fffe18 48px,#ffd20a 136px,#ffba02 197px)"></i>
<i style="top:126px;left:0px;width:197px;background:linear-gradient(90deg,#e6ff1e 0px,#fffd18 47px,#ffd30b 132px,#ffba03 197px)"></i>
<i style="top:128px;left:0px;width:197px;background:linear-gradient(90deg,#e7ff1f 0px,#fffd19 45px,#ffd10b 135px,#ffb903 197px)"></i>
<svg width="197" height="130" style="left:0;top:0"><path fill="#000" fill-opacity="0.38" d="M-2,11.7 L199,115.3 V-2 H-2Z"/></svg>
</div></div>
<svg width="1669" height="1007" style="left:0;top:0">
<path d="M1018.6,613 V120.7 H1658.3 V613" fill="none" stroke="#adadad" stroke-width="1.45"/>
<line x1="1018" y1="612.6" x2="1659" y2="612.6" stroke="#c0c0c0" stroke-width="1.4"/>
<line x1="1013.5" y1="612.8" x2="1018.6" y2="612.8" stroke="#d0d0d0" stroke-width="1.4"/>
<text transform="matrix(1.070 0 0 1 1004.22 618.00)" font-size="13.6" fill="#d4d4d4">0</text>
<line x1="1018.6" y1="612.5" x2="1018.6" y2="618.5" stroke="#d0d0d0" stroke-width="1.4"/>
<text transform="matrix(1.070 0 0 1 1014.56 634.30)" font-size="13.6" fill="#d4d4d4">0</text>
<line x1="1013.5" y1="572.4" x2="1018.6" y2="572.4" stroke="#d0d0d0" stroke-width="1.4"/>
<text transform="matrix(1.070 0 0 1 984.00 577.60)" font-size="13.6" fill="#d4d4d4">0,05</text>
<line x1="1071.8" y1="612.5" x2="1071.8" y2="618.5" stroke="#d0d0d0" stroke-width="1.4"/>
<text transform="matrix(1.070 0 0 1 1057.70 634.30)" font-size="13.6" fill="#d4d4d4">0,05</text>
<line x1="1013.5" y1="531.4" x2="1018.6" y2="531.4" stroke="#d0d0d0" stroke-width="1.4"/>
<text transform="matrix(1.070 0 0 1 992.07 536.60)" font-size="13.6" fill="#d4d4d4">0,1</text>
<line x1="1125.1" y1="612.5" x2="1125.1" y2="618.5" stroke="#d0d0d0" stroke-width="1.4"/>
<text transform="matrix(1.070 0 0 1 1114.99 634.30)" font-size="13.6" fill="#d4d4d4">0,1</text>
<line x1="1013.5" y1="490.4" x2="1018.6" y2="490.4" stroke="#d0d0d0" stroke-width="1.4"/>
<text transform="matrix(1.070 0 0 1 984.00 495.60)" font-size="13.6" fill="#d4d4d4">0,15</text>
<line x1="1178.4" y1="612.5" x2="1178.4" y2="618.5" stroke="#d0d0d0" stroke-width="1.4"/>
<text transform="matrix(1.070 0 0 1 1164.20 634.30)" font-size="13.6" fill="#d4d4d4">0,15</text>
<line x1="1013.5" y1="449.4" x2="1018.6" y2="449.4" stroke="#d0d0d0" stroke-width="1.4"/>
<text transform="matrix(1.070 0 0 1 992.07 454.60)" font-size="13.6" fill="#d4d4d4">0,2</text>
<line x1="1231.6" y1="612.5" x2="1231.6" y2="618.5" stroke="#d0d0d0" stroke-width="1.4"/>
<text transform="matrix(1.070 0 0 1 1221.49 634.30)" font-size="13.6" fill="#d4d4d4">0,2</text>
<line x1="1013.5" y1="408.4" x2="1018.6" y2="408.4" stroke="#d0d0d0" stroke-width="1.4"/>
<text transform="matrix(1.070 0 0 1 984.00 413.60)" font-size="13.6" fill="#d4d4d4">0,25</text>
<line x1="1284.8" y1="612.5" x2="1284.8" y2="618.5" stroke="#d0d0d0" stroke-width="1.4"/>
<text transform="matrix(1.070 0 0 1 1270.70 634.30)" font-size="13.6" fill="#d4d4d4">0,25</text>
<line x1="1013.5" y1="367.4" x2="1018.6" y2="367.4" stroke="#d0d0d0" stroke-width="1.4"/>
<text transform="matrix(1.070 0 0 1 992.07 372.60)" font-size="13.6" fill="#d4d4d4">0,3</text>
<line x1="1338.1" y1="612.5" x2="1338.1" y2="618.5" stroke="#d0d0d0" stroke-width="1.4"/>
<text transform="matrix(1.070 0 0 1 1327.99 634.30)" font-size="13.6" fill="#d4d4d4">0,3</text>
<line x1="1013.5" y1="326.4" x2="1018.6" y2="326.4" stroke="#d0d0d0" stroke-width="1.4"/>
<text transform="matrix(1.070 0 0 1 984.00 331.60)" font-size="13.6" fill="#d4d4d4">0,35</text>
<line x1="1391.4" y1="612.5" x2="1391.4" y2="618.5" stroke="#d0d0d0" stroke-width="1.4"/>
<text transform="matrix(1.070 0 0 1 1377.20 634.30)" font-size="13.6" fill="#d4d4d4">0,35</text>
<line x1="1013.5" y1="285.4" x2="1018.6" y2="285.4" stroke="#d0d0d0" stroke-width="1.4"/>
<text transform="matrix(1.070 0 0 1 992.07 290.60)" font-size="13.6" fill="#d4d4d4">0,4</text>
<line x1="1444.6" y1="612.5" x2="1444.6" y2="618.5" stroke="#d0d0d0" stroke-width="1.4"/>
<text transform="matrix(1.070 0 0 1 1434.49 634.30)" font-size="13.6" fill="#d4d4d4">0,4</text>
<line x1="1013.5" y1="244.4" x2="1018.6" y2="244.4" stroke="#d0d0d0" stroke-width="1.4"/>
<text transform="matrix(1.070 0 0 1 984.00 249.60)" font-size="13.6" fill="#d4d4d4">0,45</text>
<line x1="1497.8" y1="612.5" x2="1497.8" y2="618.5" stroke="#d0d0d0" stroke-width="1.4"/>
<text transform="matrix(1.070 0 0 1 1483.70 634.30)" font-size="13.6" fill="#d4d4d4">0,45</text>
<line x1="1013.5" y1="203.4" x2="1018.6" y2="203.4" stroke="#d0d0d0" stroke-width="1.4"/>
<text transform="matrix(1.070 0 0 1 992.07 208.60)" font-size="13.6" fill="#d4d4d4">0,5</text>
<line x1="1551.1" y1="612.5" x2="1551.1" y2="618.5" stroke="#d0d0d0" stroke-width="1.4"/>
<text transform="matrix(1.070 0 0 1 1540.99 634.30)" font-size="13.6" fill="#d4d4d4">0,5</text>
<line x1="1013.5" y1="162.4" x2="1018.6" y2="162.4" stroke="#d0d0d0" stroke-width="1.4"/>
<text transform="matrix(1.070 0 0 1 984.00 167.60)" font-size="13.6" fill="#d4d4d4">0,55</text>
<line x1="1604.3" y1="612.5" x2="1604.3" y2="618.5" stroke="#d0d0d0" stroke-width="1.4"/>
<text transform="matrix(1.070 0 0 1 1590.20 634.30)" font-size="13.6" fill="#d4d4d4">0,55</text>
<text transform="matrix(1.051 0 0 1 1279.90 114.70)" font-size="13.5" fill="#dcdcdc">CIE 1976 u'v'</text>
<rect x="1144.7" y="143.6" width="13.4" height="13.4" fill="none" stroke="#fff" stroke-opacity="0.9" stroke-width="1.5"/>
<rect x="1168.7" y="167.5" width="13.4" height="13.4" fill="none" stroke="#fff" stroke-opacity="0.9" stroke-width="1.5"/>
<rect x="1208.8" y="159.7" width="13.4" height="13.4" fill="none" stroke="#fff" stroke-opacity="0.9" stroke-width="1.5"/>
<rect x="1228.8" y="151.7" width="13.4" height="13.4" fill="none" stroke="#fff" stroke-opacity="0.9" stroke-width="1.5"/>
<rect x="1255.6" y="155.6" width="13.4" height="13.4" fill="none" stroke="#fff" stroke-opacity="0.9" stroke-width="1.5"/>
<rect x="1287.9" y="162.8" width="13.4" height="13.4" fill="none" stroke="#fff" stroke-opacity="0.9" stroke-width="1.5"/>
<rect x="1330.7" y="166.7" width="13.4" height="13.4" fill="none" stroke="#fff" stroke-opacity="0.9" stroke-width="1.5"/>
<rect x="1205.8" y="181.6" width="13.4" height="13.4" fill="none" stroke="#fff" stroke-opacity="0.9" stroke-width="1.5"/>
<rect x="1270.9" y="195.8" width="13.4" height="13.4" fill="none" stroke="#fff" stroke-opacity="0.9" stroke-width="1.5"/>
<rect x="1259.7" y="201.6" width="13.4" height="13.4" fill="none" stroke="#fff" stroke-opacity="0.9" stroke-width="1.5"/>
<rect x="1175.8" y="212.8" width="13.4" height="13.4" fill="none" stroke="#fff" stroke-opacity="0.9" stroke-width="1.5"/>
<rect x="1159.7" y="231.6" width="13.4" height="13.4" fill="none" stroke="#fff" stroke-opacity="0.9" stroke-width="1.5"/>
<rect x="1164.8" y="263.8" width="13.4" height="13.4" fill="none" stroke="#fff" stroke-opacity="0.9" stroke-width="1.5"/>
<rect x="1198.8" y="260.8" width="13.4" height="13.4" fill="none" stroke="#fff" stroke-opacity="0.9" stroke-width="1.5"/>
<rect x="1219.3" y="265.9" width="13.4" height="13.4" fill="none" stroke="#fff" stroke-opacity="0.9" stroke-width="1.5"/>
<rect x="1317.4" y="254.8" width="13.4" height="13.4" fill="none" stroke="#fff" stroke-opacity="0.9" stroke-width="1.5"/>
<rect x="1254.9" y="283.8" width="13.4" height="13.4" fill="none" stroke="#fff" stroke-opacity="0.9" stroke-width="1.5"/>
<rect x="1201.7" y="313.8" width="13.4" height="13.4" fill="none" stroke="#fff" stroke-opacity="0.9" stroke-width="1.5"/>
<rect x="1336.7" y="333.7" width="13.4" height="13.4" fill="none" stroke="#fff" stroke-opacity="0.9" stroke-width="1.5"/>
<rect x="1201.7" y="363.7" width="13.4" height="13.4" fill="none" stroke="#fff" stroke-opacity="0.9" stroke-width="1.5"/>
<rect x="1198.9" y="475.7" width="13.4" height="13.4" fill="none" stroke="#fff" stroke-opacity="0.9" stroke-width="1.5"/>
<rect x="1349.8" y="208.8" width="13.4" height="13.4" fill="none" stroke="#fff" stroke-opacity="0.9" stroke-width="1.5"/>
<rect x="1410.8" y="196.9" width="13.4" height="13.4" fill="none" stroke="#fff" stroke-opacity="0.9" stroke-width="1.5"/>
<rect x="1491.9" y="176.3" width="13.4" height="13.4" fill="none" stroke="#fff" stroke-opacity="0.9" stroke-width="1.5"/>
<rect x="1222.2" y="221.1" width="12.5" height="12.5" fill="none" stroke="#000" stroke-width="2.2"/>
<circle cx="1228.4" cy="224.6" r="4.2" fill="#999" stroke="#222" stroke-width="1"/>
<circle cx="1228.4" cy="226.2" r="4.2" fill="#a0a0a0" stroke="#111" stroke-width="1.1"/>
<circle cx="1152.3" cy="150.6" r="4.0" fill="#00ff00" stroke="#111" stroke-width="1.15"/>
<circle cx="1174.5" cy="171.9" r="4.0" fill="#5a8c50" stroke="#111" stroke-width="1.15"/>
<circle cx="1214.1" cy="164.0" r="4.0" fill="#a0b450" stroke="#111" stroke-width="1.15"/>
<circle cx="1234.1" cy="158.4" r="4.0" fill="#ffff00" stroke="#111" stroke-width="1.15"/>
<circle cx="1261.6" cy="162.6" r="4.0" fill="#ebc828" stroke="#111" stroke-width="1.15"/>
<circle cx="1292.5" cy="168.0" r="4.0" fill="#e6a03c" stroke="#111" stroke-width="1.15"/>
<circle cx="1335.8" cy="172.0" r="4.0" fill="#e08c32" stroke="#111" stroke-width="1.15"/>
<circle cx="1212.5" cy="185.6" r="4.0" fill="#5a6c41" stroke="#111" stroke-width="1.15"/>
<circle cx="1282.0" cy="199.5" r="4.0" fill="#735244" stroke="#111" stroke-width="1.15"/>
<circle cx="1265.5" cy="206.1" r="4.0" fill="#c39682" stroke="#111" stroke-width="1.15"/>
<circle cx="1182.5" cy="218.3" r="4.0" fill="#64b9a5" stroke="#111" stroke-width="1.15"/>
<circle cx="1166.0" cy="236.3" r="4.0" fill="#00ffff" stroke="#111" stroke-width="1.15"/>
<circle cx="1170.0" cy="267.5" r="4.0" fill="#148ca5" stroke="#111" stroke-width="1.15"/>
<circle cx="1204.1" cy="266.0" r="4.0" fill="#647da5" stroke="#111" stroke-width="1.15"/>
<circle cx="1225.8" cy="270.2" r="4.0" fill="#8782b4" stroke="#111" stroke-width="1.15"/>
<circle cx="1325.4" cy="261.9" r="4.0" fill="#be5a96" stroke="#111" stroke-width="1.15"/>
<circle cx="1264.0" cy="293.3" r="4.0" fill="#5f416e" stroke="#111" stroke-width="1.15"/>
<circle cx="1207.1" cy="322.9" r="4.0" fill="#505faa" stroke="#111" stroke-width="1.15"/>
<circle cx="1343.0" cy="339.5" r="4.0" fill="#ff00ff" stroke="#111" stroke-width="1.15"/>
<circle cx="1207.0" cy="377.5" r="4.0" fill="#414b96" stroke="#111" stroke-width="1.15"/>
<circle cx="1204.3" cy="483.7" r="4.0" fill="#0000ff" stroke="#111" stroke-width="1.15"/>
<circle cx="1359.3" cy="214.4" r="4.0" fill="#c85a69" stroke="#111" stroke-width="1.15"/>
<circle cx="1426.0" cy="200.3" r="4.0" fill="#b93c46" stroke="#111" stroke-width="1.15"/>
<circle cx="1499.4" cy="181.5" r="4.0" fill="#ff0000" stroke="#111" stroke-width="1.15"/>
<circle cx="1243.5" cy="262" r="4.8" fill="#000"/>
<rect x="1454.3" y="440.8" width="197.5" height="130" fill="none" stroke="#8c8c8c" stroke-width="1.6"/>
<rect x="1546" y="497.5" width="13" height="13" fill="none" stroke="#fff" stroke-opacity="0.9" stroke-width="1.3"/>
<circle cx="1551.2" cy="499.4" r="4.0" fill="#ffff00" stroke="#111" stroke-width="1.2"/>
<rect x="1403.5" y="581" width="252" height="27.3" fill="#333"/>
<text transform="matrix(0.950 0 0 1 1404.80 602.30)" font-size="20.6" fill="#f2f2f2">RGB Triplet: 255, 255, 0</text>
</svg>
</body></html>
